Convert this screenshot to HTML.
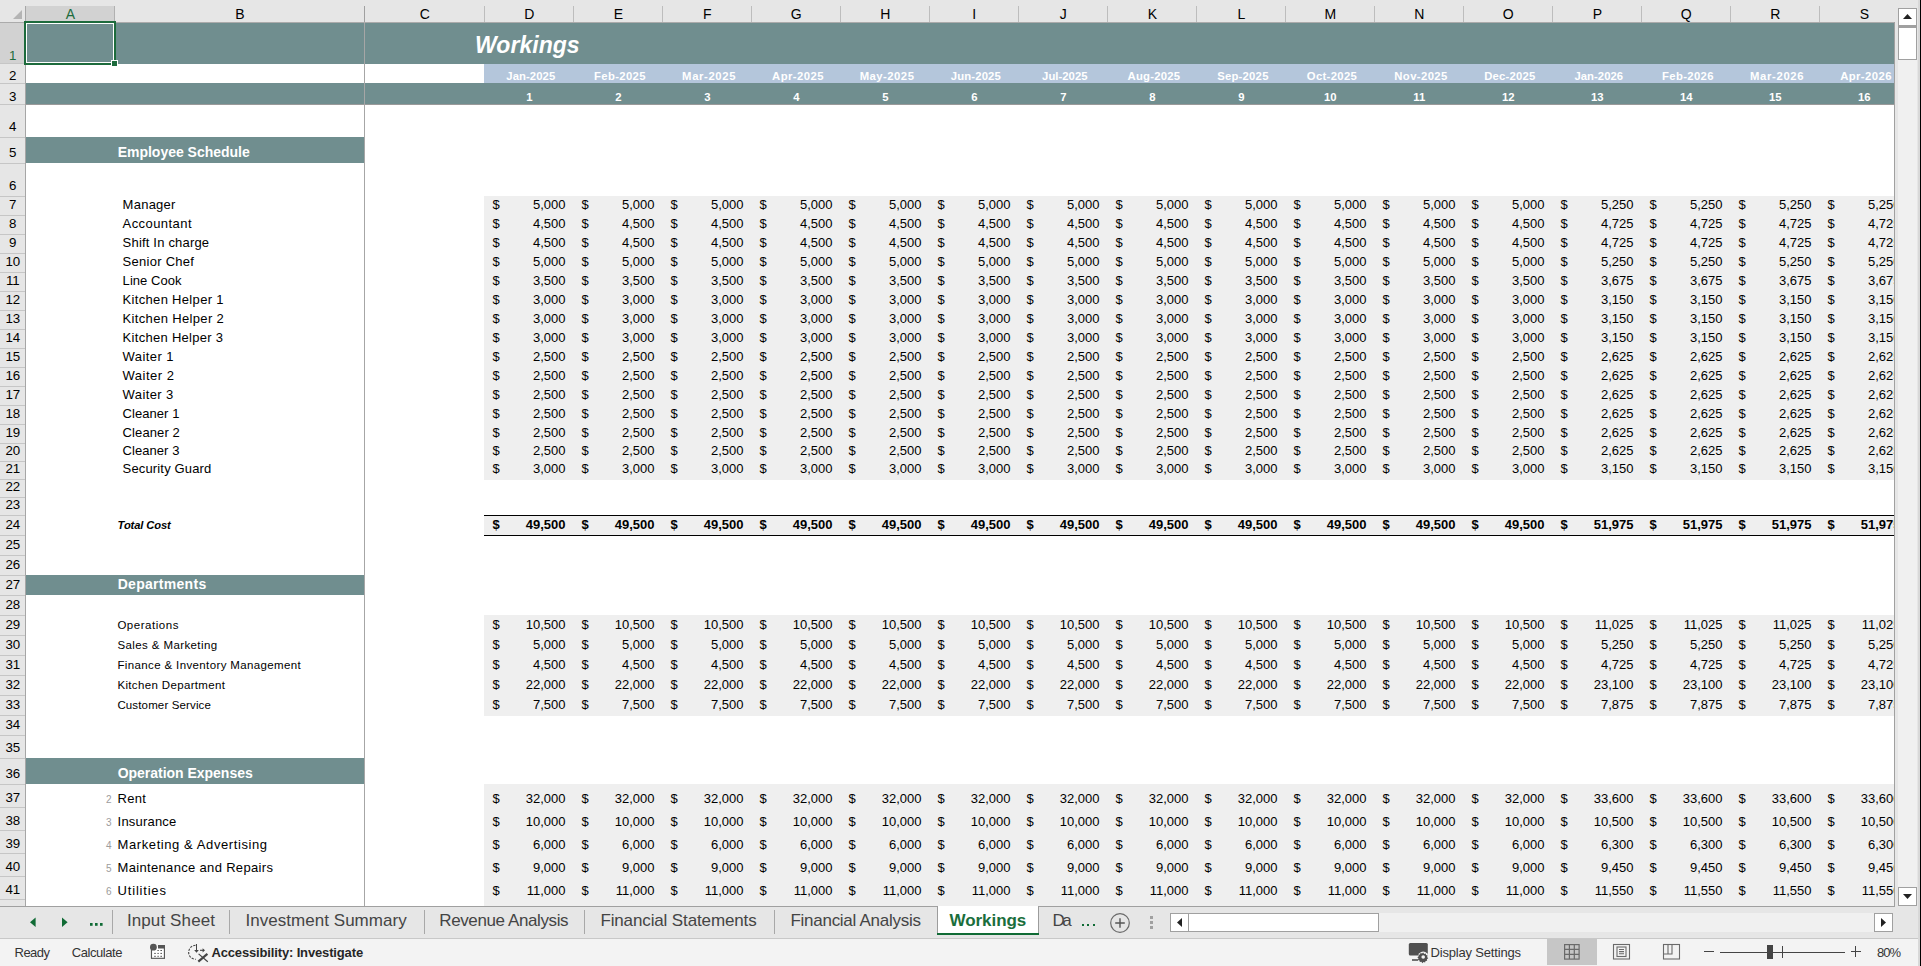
<!DOCTYPE html>
<html><head><meta charset="utf-8"><style>
html,body{margin:0;padding:0;}
body{width:1921px;height:966px;overflow:hidden;position:relative;font-family:"Liberation Sans",sans-serif;background:#fff;}
div,span,svg{position:absolute;}
span{white-space:pre;}
</style></head><body>
<div style="left:0px;top:0px;width:1921px;height:966px;background:#ffffff;"></div><div style="left:0px;top:0px;width:1894px;height:22px;background:#e6e6e6;"></div><div style="left:0px;top:22px;width:25px;height:884px;background:#e6e6e6;"></div><div style="left:26px;top:23px;width:1868px;height:883px;overflow:hidden;background:#fff"><div style="left:0px;top:0px;width:1868px;height:41px;background:#708e8f;"></div><div style="left:458px;top:41px;width:1410px;height:19px;background:#b4c6db;"></div><div style="left:0px;top:60px;width:1868px;height:21px;background:#708e8f;"></div><div style="left:0px;top:81px;width:1868px;height:1px;background:#9a9a9a;"></div><span style="left:449.00px;top:11.00px;font-size:23px;line-height:23px;color:#fff;font-weight:bold;font-style:italic;letter-spacing:0.032px;">Workings</span><span style="left:480.35px;top:48.00px;font-size:11.3px;line-height:11.3px;color:#fff;font-weight:bold;letter-spacing:0.075px;">Jan-2025</span><span style="left:500.16px;top:69.00px;font-size:11.3px;line-height:11.3px;color:#fff;font-weight:bold;">1</span><span style="left:568.05px;top:48.00px;font-size:11.3px;line-height:11.3px;color:#fff;font-weight:bold;letter-spacing:0.359px;">Feb-2025</span><span style="left:589.16px;top:69.00px;font-size:11.3px;line-height:11.3px;color:#fff;font-weight:bold;">2</span><span style="left:656.10px;top:48.00px;font-size:11.3px;line-height:11.3px;color:#fff;font-weight:bold;letter-spacing:0.629px;">Mar-2025</span><span style="left:678.16px;top:69.00px;font-size:11.3px;line-height:11.3px;color:#fff;font-weight:bold;">3</span><span style="left:746.05px;top:48.00px;font-size:11.3px;line-height:11.3px;color:#fff;font-weight:bold;letter-spacing:0.448px;">Apr-2025</span><span style="left:767.16px;top:69.00px;font-size:11.3px;line-height:11.3px;color:#fff;font-weight:bold;">4</span><span style="left:833.65px;top:48.00px;font-size:11.3px;line-height:11.3px;color:#fff;font-weight:bold;letter-spacing:0.488px;">May-2025</span><span style="left:856.16px;top:69.00px;font-size:11.3px;line-height:11.3px;color:#fff;font-weight:bold;">5</span><span style="left:924.80px;top:48.00px;font-size:11.3px;line-height:11.3px;color:#fff;font-weight:bold;letter-spacing:0.145px;">Jun-2025</span><span style="left:945.16px;top:69.00px;font-size:11.3px;line-height:11.3px;color:#fff;font-weight:bold;">6</span><span style="left:1016.10px;top:48.00px;font-size:11.3px;line-height:11.3px;color:#fff;font-weight:bold;letter-spacing:0.025px;">Jul-2025</span><span style="left:1034.16px;top:69.00px;font-size:11.3px;line-height:11.3px;color:#fff;font-weight:bold;">7</span><span style="left:1101.60px;top:48.00px;font-size:11.3px;line-height:11.3px;color:#fff;font-weight:bold;letter-spacing:0.218px;">Aug-2025</span><span style="left:1123.16px;top:69.00px;font-size:11.3px;line-height:11.3px;color:#fff;font-weight:bold;">8</span><span style="left:1191.15px;top:48.00px;font-size:11.3px;line-height:11.3px;color:#fff;font-weight:bold;letter-spacing:0.239px;">Sep-2025</span><span style="left:1212.16px;top:69.00px;font-size:11.3px;line-height:11.3px;color:#fff;font-weight:bold;">9</span><span style="left:1280.80px;top:48.00px;font-size:11.3px;line-height:11.3px;color:#fff;font-weight:bold;letter-spacing:0.323px;">Oct-2025</span><span style="left:1298.02px;top:69.00px;font-size:11.3px;line-height:11.3px;color:#fff;font-weight:bold;">10</span><span style="left:1368.30px;top:48.00px;font-size:11.3px;line-height:11.3px;color:#fff;font-weight:bold;letter-spacing:0.393px;">Nov-2025</span><span style="left:1387.33px;top:69.00px;font-size:11.3px;line-height:11.3px;color:#fff;font-weight:bold;">11</span><span style="left:1458.25px;top:48.00px;font-size:11.3px;line-height:11.3px;color:#fff;font-weight:bold;letter-spacing:0.210px;">Dec-2025</span><span style="left:1476.02px;top:69.00px;font-size:11.3px;line-height:11.3px;color:#fff;font-weight:bold;">12</span><span style="left:1548.42px;top:48.00px;font-size:11.3px;line-height:11.3px;color:#fff;font-weight:bold;letter-spacing:0.054px;">Jan-2026</span><span style="left:1565.02px;top:69.00px;font-size:11.3px;line-height:11.3px;color:#fff;font-weight:bold;">13</span><span style="left:1636.05px;top:48.00px;font-size:11.3px;line-height:11.3px;color:#fff;font-weight:bold;letter-spacing:0.359px;">Feb-2026</span><span style="left:1654.02px;top:69.00px;font-size:11.3px;line-height:11.3px;color:#fff;font-weight:bold;">14</span><span style="left:1724.05px;top:48.00px;font-size:11.3px;line-height:11.3px;color:#fff;font-weight:bold;letter-spacing:0.643px;">Mar-2026</span><span style="left:1743.02px;top:69.00px;font-size:11.3px;line-height:11.3px;color:#fff;font-weight:bold;">15</span><span style="left:1814.15px;top:48.00px;font-size:11.3px;line-height:11.3px;color:#fff;font-weight:bold;letter-spacing:0.419px;">Apr-2026</span><span style="left:1832.02px;top:69.00px;font-size:11.3px;line-height:11.3px;color:#fff;font-weight:bold;">16</span><div style="left:0px;top:114px;width:338px;height:26px;background:#708e8f;"></div><span style="left:91.70px;top:122.00px;font-size:14px;line-height:14px;color:#fff;font-weight:bold;letter-spacing:-0.017px;">Employee Schedule</span><div style="left:0px;top:552px;width:338px;height:20px;background:#708e8f;"></div><span style="left:91.70px;top:554.00px;font-size:14px;line-height:14px;color:#fff;font-weight:bold;letter-spacing:0.292px;">Departments</span><div style="left:0px;top:735px;width:338px;height:26px;background:#708e8f;"></div><span style="left:91.70px;top:743.00px;font-size:14px;line-height:14px;color:#fff;font-weight:bold;letter-spacing:-0.022px;">Operation Expenses</span><div style="left:458px;top:173px;width:1410px;height:284px;background:#efefef;"></div><span style="left:96.60px;top:175.00px;font-size:13px;line-height:13px;color:#000;letter-spacing:0.248px;">Manager</span><span style="left:466.50px;top:175.00px;font-size:13px;line-height:13px;color:#000;">$</span><span style="left:506.97px;top:175.00px;font-size:13px;line-height:13px;color:#000;">5,000</span><span style="left:555.50px;top:175.00px;font-size:13px;line-height:13px;color:#000;">$</span><span style="left:595.97px;top:175.00px;font-size:13px;line-height:13px;color:#000;">5,000</span><span style="left:644.50px;top:175.00px;font-size:13px;line-height:13px;color:#000;">$</span><span style="left:684.97px;top:175.00px;font-size:13px;line-height:13px;color:#000;">5,000</span><span style="left:733.50px;top:175.00px;font-size:13px;line-height:13px;color:#000;">$</span><span style="left:773.97px;top:175.00px;font-size:13px;line-height:13px;color:#000;">5,000</span><span style="left:822.50px;top:175.00px;font-size:13px;line-height:13px;color:#000;">$</span><span style="left:862.97px;top:175.00px;font-size:13px;line-height:13px;color:#000;">5,000</span><span style="left:911.50px;top:175.00px;font-size:13px;line-height:13px;color:#000;">$</span><span style="left:951.97px;top:175.00px;font-size:13px;line-height:13px;color:#000;">5,000</span><span style="left:1000.50px;top:175.00px;font-size:13px;line-height:13px;color:#000;">$</span><span style="left:1040.97px;top:175.00px;font-size:13px;line-height:13px;color:#000;">5,000</span><span style="left:1089.50px;top:175.00px;font-size:13px;line-height:13px;color:#000;">$</span><span style="left:1129.97px;top:175.00px;font-size:13px;line-height:13px;color:#000;">5,000</span><span style="left:1178.50px;top:175.00px;font-size:13px;line-height:13px;color:#000;">$</span><span style="left:1218.97px;top:175.00px;font-size:13px;line-height:13px;color:#000;">5,000</span><span style="left:1267.50px;top:175.00px;font-size:13px;line-height:13px;color:#000;">$</span><span style="left:1307.97px;top:175.00px;font-size:13px;line-height:13px;color:#000;">5,000</span><span style="left:1356.50px;top:175.00px;font-size:13px;line-height:13px;color:#000;">$</span><span style="left:1396.97px;top:175.00px;font-size:13px;line-height:13px;color:#000;">5,000</span><span style="left:1445.50px;top:175.00px;font-size:13px;line-height:13px;color:#000;">$</span><span style="left:1485.97px;top:175.00px;font-size:13px;line-height:13px;color:#000;">5,000</span><span style="left:1534.50px;top:175.00px;font-size:13px;line-height:13px;color:#000;">$</span><span style="left:1574.97px;top:175.00px;font-size:13px;line-height:13px;color:#000;">5,250</span><span style="left:1623.50px;top:175.00px;font-size:13px;line-height:13px;color:#000;">$</span><span style="left:1663.97px;top:175.00px;font-size:13px;line-height:13px;color:#000;">5,250</span><span style="left:1712.50px;top:175.00px;font-size:13px;line-height:13px;color:#000;">$</span><span style="left:1752.97px;top:175.00px;font-size:13px;line-height:13px;color:#000;">5,250</span><span style="left:1801.50px;top:175.00px;font-size:13px;line-height:13px;color:#000;">$</span><span style="left:1841.97px;top:175.00px;font-size:13px;line-height:13px;color:#000;">5,250</span><span style="left:96.60px;top:194.00px;font-size:13px;line-height:13px;color:#000;letter-spacing:0.429px;">Accountant</span><span style="left:466.50px;top:194.00px;font-size:13px;line-height:13px;color:#000;">$</span><span style="left:506.97px;top:194.00px;font-size:13px;line-height:13px;color:#000;">4,500</span><span style="left:555.50px;top:194.00px;font-size:13px;line-height:13px;color:#000;">$</span><span style="left:595.97px;top:194.00px;font-size:13px;line-height:13px;color:#000;">4,500</span><span style="left:644.50px;top:194.00px;font-size:13px;line-height:13px;color:#000;">$</span><span style="left:684.97px;top:194.00px;font-size:13px;line-height:13px;color:#000;">4,500</span><span style="left:733.50px;top:194.00px;font-size:13px;line-height:13px;color:#000;">$</span><span style="left:773.97px;top:194.00px;font-size:13px;line-height:13px;color:#000;">4,500</span><span style="left:822.50px;top:194.00px;font-size:13px;line-height:13px;color:#000;">$</span><span style="left:862.97px;top:194.00px;font-size:13px;line-height:13px;color:#000;">4,500</span><span style="left:911.50px;top:194.00px;font-size:13px;line-height:13px;color:#000;">$</span><span style="left:951.97px;top:194.00px;font-size:13px;line-height:13px;color:#000;">4,500</span><span style="left:1000.50px;top:194.00px;font-size:13px;line-height:13px;color:#000;">$</span><span style="left:1040.97px;top:194.00px;font-size:13px;line-height:13px;color:#000;">4,500</span><span style="left:1089.50px;top:194.00px;font-size:13px;line-height:13px;color:#000;">$</span><span style="left:1129.97px;top:194.00px;font-size:13px;line-height:13px;color:#000;">4,500</span><span style="left:1178.50px;top:194.00px;font-size:13px;line-height:13px;color:#000;">$</span><span style="left:1218.97px;top:194.00px;font-size:13px;line-height:13px;color:#000;">4,500</span><span style="left:1267.50px;top:194.00px;font-size:13px;line-height:13px;color:#000;">$</span><span style="left:1307.97px;top:194.00px;font-size:13px;line-height:13px;color:#000;">4,500</span><span style="left:1356.50px;top:194.00px;font-size:13px;line-height:13px;color:#000;">$</span><span style="left:1396.97px;top:194.00px;font-size:13px;line-height:13px;color:#000;">4,500</span><span style="left:1445.50px;top:194.00px;font-size:13px;line-height:13px;color:#000;">$</span><span style="left:1485.97px;top:194.00px;font-size:13px;line-height:13px;color:#000;">4,500</span><span style="left:1534.50px;top:194.00px;font-size:13px;line-height:13px;color:#000;">$</span><span style="left:1574.97px;top:194.00px;font-size:13px;line-height:13px;color:#000;">4,725</span><span style="left:1623.50px;top:194.00px;font-size:13px;line-height:13px;color:#000;">$</span><span style="left:1663.97px;top:194.00px;font-size:13px;line-height:13px;color:#000;">4,725</span><span style="left:1712.50px;top:194.00px;font-size:13px;line-height:13px;color:#000;">$</span><span style="left:1752.97px;top:194.00px;font-size:13px;line-height:13px;color:#000;">4,725</span><span style="left:1801.50px;top:194.00px;font-size:13px;line-height:13px;color:#000;">$</span><span style="left:1841.97px;top:194.00px;font-size:13px;line-height:13px;color:#000;">4,725</span><span style="left:96.60px;top:213.00px;font-size:13px;line-height:13px;color:#000;letter-spacing:0.191px;">Shift In charge</span><span style="left:466.50px;top:213.00px;font-size:13px;line-height:13px;color:#000;">$</span><span style="left:506.97px;top:213.00px;font-size:13px;line-height:13px;color:#000;">4,500</span><span style="left:555.50px;top:213.00px;font-size:13px;line-height:13px;color:#000;">$</span><span style="left:595.97px;top:213.00px;font-size:13px;line-height:13px;color:#000;">4,500</span><span style="left:644.50px;top:213.00px;font-size:13px;line-height:13px;color:#000;">$</span><span style="left:684.97px;top:213.00px;font-size:13px;line-height:13px;color:#000;">4,500</span><span style="left:733.50px;top:213.00px;font-size:13px;line-height:13px;color:#000;">$</span><span style="left:773.97px;top:213.00px;font-size:13px;line-height:13px;color:#000;">4,500</span><span style="left:822.50px;top:213.00px;font-size:13px;line-height:13px;color:#000;">$</span><span style="left:862.97px;top:213.00px;font-size:13px;line-height:13px;color:#000;">4,500</span><span style="left:911.50px;top:213.00px;font-size:13px;line-height:13px;color:#000;">$</span><span style="left:951.97px;top:213.00px;font-size:13px;line-height:13px;color:#000;">4,500</span><span style="left:1000.50px;top:213.00px;font-size:13px;line-height:13px;color:#000;">$</span><span style="left:1040.97px;top:213.00px;font-size:13px;line-height:13px;color:#000;">4,500</span><span style="left:1089.50px;top:213.00px;font-size:13px;line-height:13px;color:#000;">$</span><span style="left:1129.97px;top:213.00px;font-size:13px;line-height:13px;color:#000;">4,500</span><span style="left:1178.50px;top:213.00px;font-size:13px;line-height:13px;color:#000;">$</span><span style="left:1218.97px;top:213.00px;font-size:13px;line-height:13px;color:#000;">4,500</span><span style="left:1267.50px;top:213.00px;font-size:13px;line-height:13px;color:#000;">$</span><span style="left:1307.97px;top:213.00px;font-size:13px;line-height:13px;color:#000;">4,500</span><span style="left:1356.50px;top:213.00px;font-size:13px;line-height:13px;color:#000;">$</span><span style="left:1396.97px;top:213.00px;font-size:13px;line-height:13px;color:#000;">4,500</span><span style="left:1445.50px;top:213.00px;font-size:13px;line-height:13px;color:#000;">$</span><span style="left:1485.97px;top:213.00px;font-size:13px;line-height:13px;color:#000;">4,500</span><span style="left:1534.50px;top:213.00px;font-size:13px;line-height:13px;color:#000;">$</span><span style="left:1574.97px;top:213.00px;font-size:13px;line-height:13px;color:#000;">4,725</span><span style="left:1623.50px;top:213.00px;font-size:13px;line-height:13px;color:#000;">$</span><span style="left:1663.97px;top:213.00px;font-size:13px;line-height:13px;color:#000;">4,725</span><span style="left:1712.50px;top:213.00px;font-size:13px;line-height:13px;color:#000;">$</span><span style="left:1752.97px;top:213.00px;font-size:13px;line-height:13px;color:#000;">4,725</span><span style="left:1801.50px;top:213.00px;font-size:13px;line-height:13px;color:#000;">$</span><span style="left:1841.97px;top:213.00px;font-size:13px;line-height:13px;color:#000;">4,725</span><span style="left:96.60px;top:232.00px;font-size:13px;line-height:13px;color:#000;letter-spacing:0.272px;">Senior Chef</span><span style="left:466.50px;top:232.00px;font-size:13px;line-height:13px;color:#000;">$</span><span style="left:506.97px;top:232.00px;font-size:13px;line-height:13px;color:#000;">5,000</span><span style="left:555.50px;top:232.00px;font-size:13px;line-height:13px;color:#000;">$</span><span style="left:595.97px;top:232.00px;font-size:13px;line-height:13px;color:#000;">5,000</span><span style="left:644.50px;top:232.00px;font-size:13px;line-height:13px;color:#000;">$</span><span style="left:684.97px;top:232.00px;font-size:13px;line-height:13px;color:#000;">5,000</span><span style="left:733.50px;top:232.00px;font-size:13px;line-height:13px;color:#000;">$</span><span style="left:773.97px;top:232.00px;font-size:13px;line-height:13px;color:#000;">5,000</span><span style="left:822.50px;top:232.00px;font-size:13px;line-height:13px;color:#000;">$</span><span style="left:862.97px;top:232.00px;font-size:13px;line-height:13px;color:#000;">5,000</span><span style="left:911.50px;top:232.00px;font-size:13px;line-height:13px;color:#000;">$</span><span style="left:951.97px;top:232.00px;font-size:13px;line-height:13px;color:#000;">5,000</span><span style="left:1000.50px;top:232.00px;font-size:13px;line-height:13px;color:#000;">$</span><span style="left:1040.97px;top:232.00px;font-size:13px;line-height:13px;color:#000;">5,000</span><span style="left:1089.50px;top:232.00px;font-size:13px;line-height:13px;color:#000;">$</span><span style="left:1129.97px;top:232.00px;font-size:13px;line-height:13px;color:#000;">5,000</span><span style="left:1178.50px;top:232.00px;font-size:13px;line-height:13px;color:#000;">$</span><span style="left:1218.97px;top:232.00px;font-size:13px;line-height:13px;color:#000;">5,000</span><span style="left:1267.50px;top:232.00px;font-size:13px;line-height:13px;color:#000;">$</span><span style="left:1307.97px;top:232.00px;font-size:13px;line-height:13px;color:#000;">5,000</span><span style="left:1356.50px;top:232.00px;font-size:13px;line-height:13px;color:#000;">$</span><span style="left:1396.97px;top:232.00px;font-size:13px;line-height:13px;color:#000;">5,000</span><span style="left:1445.50px;top:232.00px;font-size:13px;line-height:13px;color:#000;">$</span><span style="left:1485.97px;top:232.00px;font-size:13px;line-height:13px;color:#000;">5,000</span><span style="left:1534.50px;top:232.00px;font-size:13px;line-height:13px;color:#000;">$</span><span style="left:1574.97px;top:232.00px;font-size:13px;line-height:13px;color:#000;">5,250</span><span style="left:1623.50px;top:232.00px;font-size:13px;line-height:13px;color:#000;">$</span><span style="left:1663.97px;top:232.00px;font-size:13px;line-height:13px;color:#000;">5,250</span><span style="left:1712.50px;top:232.00px;font-size:13px;line-height:13px;color:#000;">$</span><span style="left:1752.97px;top:232.00px;font-size:13px;line-height:13px;color:#000;">5,250</span><span style="left:1801.50px;top:232.00px;font-size:13px;line-height:13px;color:#000;">$</span><span style="left:1841.97px;top:232.00px;font-size:13px;line-height:13px;color:#000;">5,250</span><span style="left:96.60px;top:251.00px;font-size:13px;line-height:13px;color:#000;letter-spacing:0.054px;">Line Cook</span><span style="left:466.50px;top:251.00px;font-size:13px;line-height:13px;color:#000;">$</span><span style="left:506.97px;top:251.00px;font-size:13px;line-height:13px;color:#000;">3,500</span><span style="left:555.50px;top:251.00px;font-size:13px;line-height:13px;color:#000;">$</span><span style="left:595.97px;top:251.00px;font-size:13px;line-height:13px;color:#000;">3,500</span><span style="left:644.50px;top:251.00px;font-size:13px;line-height:13px;color:#000;">$</span><span style="left:684.97px;top:251.00px;font-size:13px;line-height:13px;color:#000;">3,500</span><span style="left:733.50px;top:251.00px;font-size:13px;line-height:13px;color:#000;">$</span><span style="left:773.97px;top:251.00px;font-size:13px;line-height:13px;color:#000;">3,500</span><span style="left:822.50px;top:251.00px;font-size:13px;line-height:13px;color:#000;">$</span><span style="left:862.97px;top:251.00px;font-size:13px;line-height:13px;color:#000;">3,500</span><span style="left:911.50px;top:251.00px;font-size:13px;line-height:13px;color:#000;">$</span><span style="left:951.97px;top:251.00px;font-size:13px;line-height:13px;color:#000;">3,500</span><span style="left:1000.50px;top:251.00px;font-size:13px;line-height:13px;color:#000;">$</span><span style="left:1040.97px;top:251.00px;font-size:13px;line-height:13px;color:#000;">3,500</span><span style="left:1089.50px;top:251.00px;font-size:13px;line-height:13px;color:#000;">$</span><span style="left:1129.97px;top:251.00px;font-size:13px;line-height:13px;color:#000;">3,500</span><span style="left:1178.50px;top:251.00px;font-size:13px;line-height:13px;color:#000;">$</span><span style="left:1218.97px;top:251.00px;font-size:13px;line-height:13px;color:#000;">3,500</span><span style="left:1267.50px;top:251.00px;font-size:13px;line-height:13px;color:#000;">$</span><span style="left:1307.97px;top:251.00px;font-size:13px;line-height:13px;color:#000;">3,500</span><span style="left:1356.50px;top:251.00px;font-size:13px;line-height:13px;color:#000;">$</span><span style="left:1396.97px;top:251.00px;font-size:13px;line-height:13px;color:#000;">3,500</span><span style="left:1445.50px;top:251.00px;font-size:13px;line-height:13px;color:#000;">$</span><span style="left:1485.97px;top:251.00px;font-size:13px;line-height:13px;color:#000;">3,500</span><span style="left:1534.50px;top:251.00px;font-size:13px;line-height:13px;color:#000;">$</span><span style="left:1574.97px;top:251.00px;font-size:13px;line-height:13px;color:#000;">3,675</span><span style="left:1623.50px;top:251.00px;font-size:13px;line-height:13px;color:#000;">$</span><span style="left:1663.97px;top:251.00px;font-size:13px;line-height:13px;color:#000;">3,675</span><span style="left:1712.50px;top:251.00px;font-size:13px;line-height:13px;color:#000;">$</span><span style="left:1752.97px;top:251.00px;font-size:13px;line-height:13px;color:#000;">3,675</span><span style="left:1801.50px;top:251.00px;font-size:13px;line-height:13px;color:#000;">$</span><span style="left:1841.97px;top:251.00px;font-size:13px;line-height:13px;color:#000;">3,675</span><span style="left:96.60px;top:270.00px;font-size:13px;line-height:13px;color:#000;letter-spacing:0.319px;">Kitchen Helper 1</span><span style="left:466.50px;top:270.00px;font-size:13px;line-height:13px;color:#000;">$</span><span style="left:506.97px;top:270.00px;font-size:13px;line-height:13px;color:#000;">3,000</span><span style="left:555.50px;top:270.00px;font-size:13px;line-height:13px;color:#000;">$</span><span style="left:595.97px;top:270.00px;font-size:13px;line-height:13px;color:#000;">3,000</span><span style="left:644.50px;top:270.00px;font-size:13px;line-height:13px;color:#000;">$</span><span style="left:684.97px;top:270.00px;font-size:13px;line-height:13px;color:#000;">3,000</span><span style="left:733.50px;top:270.00px;font-size:13px;line-height:13px;color:#000;">$</span><span style="left:773.97px;top:270.00px;font-size:13px;line-height:13px;color:#000;">3,000</span><span style="left:822.50px;top:270.00px;font-size:13px;line-height:13px;color:#000;">$</span><span style="left:862.97px;top:270.00px;font-size:13px;line-height:13px;color:#000;">3,000</span><span style="left:911.50px;top:270.00px;font-size:13px;line-height:13px;color:#000;">$</span><span style="left:951.97px;top:270.00px;font-size:13px;line-height:13px;color:#000;">3,000</span><span style="left:1000.50px;top:270.00px;font-size:13px;line-height:13px;color:#000;">$</span><span style="left:1040.97px;top:270.00px;font-size:13px;line-height:13px;color:#000;">3,000</span><span style="left:1089.50px;top:270.00px;font-size:13px;line-height:13px;color:#000;">$</span><span style="left:1129.97px;top:270.00px;font-size:13px;line-height:13px;color:#000;">3,000</span><span style="left:1178.50px;top:270.00px;font-size:13px;line-height:13px;color:#000;">$</span><span style="left:1218.97px;top:270.00px;font-size:13px;line-height:13px;color:#000;">3,000</span><span style="left:1267.50px;top:270.00px;font-size:13px;line-height:13px;color:#000;">$</span><span style="left:1307.97px;top:270.00px;font-size:13px;line-height:13px;color:#000;">3,000</span><span style="left:1356.50px;top:270.00px;font-size:13px;line-height:13px;color:#000;">$</span><span style="left:1396.97px;top:270.00px;font-size:13px;line-height:13px;color:#000;">3,000</span><span style="left:1445.50px;top:270.00px;font-size:13px;line-height:13px;color:#000;">$</span><span style="left:1485.97px;top:270.00px;font-size:13px;line-height:13px;color:#000;">3,000</span><span style="left:1534.50px;top:270.00px;font-size:13px;line-height:13px;color:#000;">$</span><span style="left:1574.97px;top:270.00px;font-size:13px;line-height:13px;color:#000;">3,150</span><span style="left:1623.50px;top:270.00px;font-size:13px;line-height:13px;color:#000;">$</span><span style="left:1663.97px;top:270.00px;font-size:13px;line-height:13px;color:#000;">3,150</span><span style="left:1712.50px;top:270.00px;font-size:13px;line-height:13px;color:#000;">$</span><span style="left:1752.97px;top:270.00px;font-size:13px;line-height:13px;color:#000;">3,150</span><span style="left:1801.50px;top:270.00px;font-size:13px;line-height:13px;color:#000;">$</span><span style="left:1841.97px;top:270.00px;font-size:13px;line-height:13px;color:#000;">3,150</span><span style="left:96.60px;top:289.00px;font-size:13px;line-height:13px;color:#000;letter-spacing:0.339px;">Kitchen Helper 2</span><span style="left:466.50px;top:289.00px;font-size:13px;line-height:13px;color:#000;">$</span><span style="left:506.97px;top:289.00px;font-size:13px;line-height:13px;color:#000;">3,000</span><span style="left:555.50px;top:289.00px;font-size:13px;line-height:13px;color:#000;">$</span><span style="left:595.97px;top:289.00px;font-size:13px;line-height:13px;color:#000;">3,000</span><span style="left:644.50px;top:289.00px;font-size:13px;line-height:13px;color:#000;">$</span><span style="left:684.97px;top:289.00px;font-size:13px;line-height:13px;color:#000;">3,000</span><span style="left:733.50px;top:289.00px;font-size:13px;line-height:13px;color:#000;">$</span><span style="left:773.97px;top:289.00px;font-size:13px;line-height:13px;color:#000;">3,000</span><span style="left:822.50px;top:289.00px;font-size:13px;line-height:13px;color:#000;">$</span><span style="left:862.97px;top:289.00px;font-size:13px;line-height:13px;color:#000;">3,000</span><span style="left:911.50px;top:289.00px;font-size:13px;line-height:13px;color:#000;">$</span><span style="left:951.97px;top:289.00px;font-size:13px;line-height:13px;color:#000;">3,000</span><span style="left:1000.50px;top:289.00px;font-size:13px;line-height:13px;color:#000;">$</span><span style="left:1040.97px;top:289.00px;font-size:13px;line-height:13px;color:#000;">3,000</span><span style="left:1089.50px;top:289.00px;font-size:13px;line-height:13px;color:#000;">$</span><span style="left:1129.97px;top:289.00px;font-size:13px;line-height:13px;color:#000;">3,000</span><span style="left:1178.50px;top:289.00px;font-size:13px;line-height:13px;color:#000;">$</span><span style="left:1218.97px;top:289.00px;font-size:13px;line-height:13px;color:#000;">3,000</span><span style="left:1267.50px;top:289.00px;font-size:13px;line-height:13px;color:#000;">$</span><span style="left:1307.97px;top:289.00px;font-size:13px;line-height:13px;color:#000;">3,000</span><span style="left:1356.50px;top:289.00px;font-size:13px;line-height:13px;color:#000;">$</span><span style="left:1396.97px;top:289.00px;font-size:13px;line-height:13px;color:#000;">3,000</span><span style="left:1445.50px;top:289.00px;font-size:13px;line-height:13px;color:#000;">$</span><span style="left:1485.97px;top:289.00px;font-size:13px;line-height:13px;color:#000;">3,000</span><span style="left:1534.50px;top:289.00px;font-size:13px;line-height:13px;color:#000;">$</span><span style="left:1574.97px;top:289.00px;font-size:13px;line-height:13px;color:#000;">3,150</span><span style="left:1623.50px;top:289.00px;font-size:13px;line-height:13px;color:#000;">$</span><span style="left:1663.97px;top:289.00px;font-size:13px;line-height:13px;color:#000;">3,150</span><span style="left:1712.50px;top:289.00px;font-size:13px;line-height:13px;color:#000;">$</span><span style="left:1752.97px;top:289.00px;font-size:13px;line-height:13px;color:#000;">3,150</span><span style="left:1801.50px;top:289.00px;font-size:13px;line-height:13px;color:#000;">$</span><span style="left:1841.97px;top:289.00px;font-size:13px;line-height:13px;color:#000;">3,150</span><span style="left:96.60px;top:308.00px;font-size:13px;line-height:13px;color:#000;letter-spacing:0.293px;">Kitchen Helper 3</span><span style="left:466.50px;top:308.00px;font-size:13px;line-height:13px;color:#000;">$</span><span style="left:506.97px;top:308.00px;font-size:13px;line-height:13px;color:#000;">3,000</span><span style="left:555.50px;top:308.00px;font-size:13px;line-height:13px;color:#000;">$</span><span style="left:595.97px;top:308.00px;font-size:13px;line-height:13px;color:#000;">3,000</span><span style="left:644.50px;top:308.00px;font-size:13px;line-height:13px;color:#000;">$</span><span style="left:684.97px;top:308.00px;font-size:13px;line-height:13px;color:#000;">3,000</span><span style="left:733.50px;top:308.00px;font-size:13px;line-height:13px;color:#000;">$</span><span style="left:773.97px;top:308.00px;font-size:13px;line-height:13px;color:#000;">3,000</span><span style="left:822.50px;top:308.00px;font-size:13px;line-height:13px;color:#000;">$</span><span style="left:862.97px;top:308.00px;font-size:13px;line-height:13px;color:#000;">3,000</span><span style="left:911.50px;top:308.00px;font-size:13px;line-height:13px;color:#000;">$</span><span style="left:951.97px;top:308.00px;font-size:13px;line-height:13px;color:#000;">3,000</span><span style="left:1000.50px;top:308.00px;font-size:13px;line-height:13px;color:#000;">$</span><span style="left:1040.97px;top:308.00px;font-size:13px;line-height:13px;color:#000;">3,000</span><span style="left:1089.50px;top:308.00px;font-size:13px;line-height:13px;color:#000;">$</span><span style="left:1129.97px;top:308.00px;font-size:13px;line-height:13px;color:#000;">3,000</span><span style="left:1178.50px;top:308.00px;font-size:13px;line-height:13px;color:#000;">$</span><span style="left:1218.97px;top:308.00px;font-size:13px;line-height:13px;color:#000;">3,000</span><span style="left:1267.50px;top:308.00px;font-size:13px;line-height:13px;color:#000;">$</span><span style="left:1307.97px;top:308.00px;font-size:13px;line-height:13px;color:#000;">3,000</span><span style="left:1356.50px;top:308.00px;font-size:13px;line-height:13px;color:#000;">$</span><span style="left:1396.97px;top:308.00px;font-size:13px;line-height:13px;color:#000;">3,000</span><span style="left:1445.50px;top:308.00px;font-size:13px;line-height:13px;color:#000;">$</span><span style="left:1485.97px;top:308.00px;font-size:13px;line-height:13px;color:#000;">3,000</span><span style="left:1534.50px;top:308.00px;font-size:13px;line-height:13px;color:#000;">$</span><span style="left:1574.97px;top:308.00px;font-size:13px;line-height:13px;color:#000;">3,150</span><span style="left:1623.50px;top:308.00px;font-size:13px;line-height:13px;color:#000;">$</span><span style="left:1663.97px;top:308.00px;font-size:13px;line-height:13px;color:#000;">3,150</span><span style="left:1712.50px;top:308.00px;font-size:13px;line-height:13px;color:#000;">$</span><span style="left:1752.97px;top:308.00px;font-size:13px;line-height:13px;color:#000;">3,150</span><span style="left:1801.50px;top:308.00px;font-size:13px;line-height:13px;color:#000;">$</span><span style="left:1841.97px;top:308.00px;font-size:13px;line-height:13px;color:#000;">3,150</span><span style="left:96.60px;top:327.00px;font-size:13px;line-height:13px;color:#000;letter-spacing:0.440px;">Waiter 1</span><span style="left:466.50px;top:327.00px;font-size:13px;line-height:13px;color:#000;">$</span><span style="left:506.97px;top:327.00px;font-size:13px;line-height:13px;color:#000;">2,500</span><span style="left:555.50px;top:327.00px;font-size:13px;line-height:13px;color:#000;">$</span><span style="left:595.97px;top:327.00px;font-size:13px;line-height:13px;color:#000;">2,500</span><span style="left:644.50px;top:327.00px;font-size:13px;line-height:13px;color:#000;">$</span><span style="left:684.97px;top:327.00px;font-size:13px;line-height:13px;color:#000;">2,500</span><span style="left:733.50px;top:327.00px;font-size:13px;line-height:13px;color:#000;">$</span><span style="left:773.97px;top:327.00px;font-size:13px;line-height:13px;color:#000;">2,500</span><span style="left:822.50px;top:327.00px;font-size:13px;line-height:13px;color:#000;">$</span><span style="left:862.97px;top:327.00px;font-size:13px;line-height:13px;color:#000;">2,500</span><span style="left:911.50px;top:327.00px;font-size:13px;line-height:13px;color:#000;">$</span><span style="left:951.97px;top:327.00px;font-size:13px;line-height:13px;color:#000;">2,500</span><span style="left:1000.50px;top:327.00px;font-size:13px;line-height:13px;color:#000;">$</span><span style="left:1040.97px;top:327.00px;font-size:13px;line-height:13px;color:#000;">2,500</span><span style="left:1089.50px;top:327.00px;font-size:13px;line-height:13px;color:#000;">$</span><span style="left:1129.97px;top:327.00px;font-size:13px;line-height:13px;color:#000;">2,500</span><span style="left:1178.50px;top:327.00px;font-size:13px;line-height:13px;color:#000;">$</span><span style="left:1218.97px;top:327.00px;font-size:13px;line-height:13px;color:#000;">2,500</span><span style="left:1267.50px;top:327.00px;font-size:13px;line-height:13px;color:#000;">$</span><span style="left:1307.97px;top:327.00px;font-size:13px;line-height:13px;color:#000;">2,500</span><span style="left:1356.50px;top:327.00px;font-size:13px;line-height:13px;color:#000;">$</span><span style="left:1396.97px;top:327.00px;font-size:13px;line-height:13px;color:#000;">2,500</span><span style="left:1445.50px;top:327.00px;font-size:13px;line-height:13px;color:#000;">$</span><span style="left:1485.97px;top:327.00px;font-size:13px;line-height:13px;color:#000;">2,500</span><span style="left:1534.50px;top:327.00px;font-size:13px;line-height:13px;color:#000;">$</span><span style="left:1574.97px;top:327.00px;font-size:13px;line-height:13px;color:#000;">2,625</span><span style="left:1623.50px;top:327.00px;font-size:13px;line-height:13px;color:#000;">$</span><span style="left:1663.97px;top:327.00px;font-size:13px;line-height:13px;color:#000;">2,625</span><span style="left:1712.50px;top:327.00px;font-size:13px;line-height:13px;color:#000;">$</span><span style="left:1752.97px;top:327.00px;font-size:13px;line-height:13px;color:#000;">2,625</span><span style="left:1801.50px;top:327.00px;font-size:13px;line-height:13px;color:#000;">$</span><span style="left:1841.97px;top:327.00px;font-size:13px;line-height:13px;color:#000;">2,625</span><span style="left:96.60px;top:346.00px;font-size:13px;line-height:13px;color:#000;letter-spacing:0.483px;">Waiter 2</span><span style="left:466.50px;top:346.00px;font-size:13px;line-height:13px;color:#000;">$</span><span style="left:506.97px;top:346.00px;font-size:13px;line-height:13px;color:#000;">2,500</span><span style="left:555.50px;top:346.00px;font-size:13px;line-height:13px;color:#000;">$</span><span style="left:595.97px;top:346.00px;font-size:13px;line-height:13px;color:#000;">2,500</span><span style="left:644.50px;top:346.00px;font-size:13px;line-height:13px;color:#000;">$</span><span style="left:684.97px;top:346.00px;font-size:13px;line-height:13px;color:#000;">2,500</span><span style="left:733.50px;top:346.00px;font-size:13px;line-height:13px;color:#000;">$</span><span style="left:773.97px;top:346.00px;font-size:13px;line-height:13px;color:#000;">2,500</span><span style="left:822.50px;top:346.00px;font-size:13px;line-height:13px;color:#000;">$</span><span style="left:862.97px;top:346.00px;font-size:13px;line-height:13px;color:#000;">2,500</span><span style="left:911.50px;top:346.00px;font-size:13px;line-height:13px;color:#000;">$</span><span style="left:951.97px;top:346.00px;font-size:13px;line-height:13px;color:#000;">2,500</span><span style="left:1000.50px;top:346.00px;font-size:13px;line-height:13px;color:#000;">$</span><span style="left:1040.97px;top:346.00px;font-size:13px;line-height:13px;color:#000;">2,500</span><span style="left:1089.50px;top:346.00px;font-size:13px;line-height:13px;color:#000;">$</span><span style="left:1129.97px;top:346.00px;font-size:13px;line-height:13px;color:#000;">2,500</span><span style="left:1178.50px;top:346.00px;font-size:13px;line-height:13px;color:#000;">$</span><span style="left:1218.97px;top:346.00px;font-size:13px;line-height:13px;color:#000;">2,500</span><span style="left:1267.50px;top:346.00px;font-size:13px;line-height:13px;color:#000;">$</span><span style="left:1307.97px;top:346.00px;font-size:13px;line-height:13px;color:#000;">2,500</span><span style="left:1356.50px;top:346.00px;font-size:13px;line-height:13px;color:#000;">$</span><span style="left:1396.97px;top:346.00px;font-size:13px;line-height:13px;color:#000;">2,500</span><span style="left:1445.50px;top:346.00px;font-size:13px;line-height:13px;color:#000;">$</span><span style="left:1485.97px;top:346.00px;font-size:13px;line-height:13px;color:#000;">2,500</span><span style="left:1534.50px;top:346.00px;font-size:13px;line-height:13px;color:#000;">$</span><span style="left:1574.97px;top:346.00px;font-size:13px;line-height:13px;color:#000;">2,625</span><span style="left:1623.50px;top:346.00px;font-size:13px;line-height:13px;color:#000;">$</span><span style="left:1663.97px;top:346.00px;font-size:13px;line-height:13px;color:#000;">2,625</span><span style="left:1712.50px;top:346.00px;font-size:13px;line-height:13px;color:#000;">$</span><span style="left:1752.97px;top:346.00px;font-size:13px;line-height:13px;color:#000;">2,625</span><span style="left:1801.50px;top:346.00px;font-size:13px;line-height:13px;color:#000;">$</span><span style="left:1841.97px;top:346.00px;font-size:13px;line-height:13px;color:#000;">2,625</span><span style="left:96.60px;top:365.00px;font-size:13px;line-height:13px;color:#000;letter-spacing:0.397px;">Waiter 3</span><span style="left:466.50px;top:365.00px;font-size:13px;line-height:13px;color:#000;">$</span><span style="left:506.97px;top:365.00px;font-size:13px;line-height:13px;color:#000;">2,500</span><span style="left:555.50px;top:365.00px;font-size:13px;line-height:13px;color:#000;">$</span><span style="left:595.97px;top:365.00px;font-size:13px;line-height:13px;color:#000;">2,500</span><span style="left:644.50px;top:365.00px;font-size:13px;line-height:13px;color:#000;">$</span><span style="left:684.97px;top:365.00px;font-size:13px;line-height:13px;color:#000;">2,500</span><span style="left:733.50px;top:365.00px;font-size:13px;line-height:13px;color:#000;">$</span><span style="left:773.97px;top:365.00px;font-size:13px;line-height:13px;color:#000;">2,500</span><span style="left:822.50px;top:365.00px;font-size:13px;line-height:13px;color:#000;">$</span><span style="left:862.97px;top:365.00px;font-size:13px;line-height:13px;color:#000;">2,500</span><span style="left:911.50px;top:365.00px;font-size:13px;line-height:13px;color:#000;">$</span><span style="left:951.97px;top:365.00px;font-size:13px;line-height:13px;color:#000;">2,500</span><span style="left:1000.50px;top:365.00px;font-size:13px;line-height:13px;color:#000;">$</span><span style="left:1040.97px;top:365.00px;font-size:13px;line-height:13px;color:#000;">2,500</span><span style="left:1089.50px;top:365.00px;font-size:13px;line-height:13px;color:#000;">$</span><span style="left:1129.97px;top:365.00px;font-size:13px;line-height:13px;color:#000;">2,500</span><span style="left:1178.50px;top:365.00px;font-size:13px;line-height:13px;color:#000;">$</span><span style="left:1218.97px;top:365.00px;font-size:13px;line-height:13px;color:#000;">2,500</span><span style="left:1267.50px;top:365.00px;font-size:13px;line-height:13px;color:#000;">$</span><span style="left:1307.97px;top:365.00px;font-size:13px;line-height:13px;color:#000;">2,500</span><span style="left:1356.50px;top:365.00px;font-size:13px;line-height:13px;color:#000;">$</span><span style="left:1396.97px;top:365.00px;font-size:13px;line-height:13px;color:#000;">2,500</span><span style="left:1445.50px;top:365.00px;font-size:13px;line-height:13px;color:#000;">$</span><span style="left:1485.97px;top:365.00px;font-size:13px;line-height:13px;color:#000;">2,500</span><span style="left:1534.50px;top:365.00px;font-size:13px;line-height:13px;color:#000;">$</span><span style="left:1574.97px;top:365.00px;font-size:13px;line-height:13px;color:#000;">2,625</span><span style="left:1623.50px;top:365.00px;font-size:13px;line-height:13px;color:#000;">$</span><span style="left:1663.97px;top:365.00px;font-size:13px;line-height:13px;color:#000;">2,625</span><span style="left:1712.50px;top:365.00px;font-size:13px;line-height:13px;color:#000;">$</span><span style="left:1752.97px;top:365.00px;font-size:13px;line-height:13px;color:#000;">2,625</span><span style="left:1801.50px;top:365.00px;font-size:13px;line-height:13px;color:#000;">$</span><span style="left:1841.97px;top:365.00px;font-size:13px;line-height:13px;color:#000;">2,625</span><span style="left:96.60px;top:384.00px;font-size:13px;line-height:13px;color:#000;letter-spacing:0.054px;">Cleaner 1</span><span style="left:466.50px;top:384.00px;font-size:13px;line-height:13px;color:#000;">$</span><span style="left:506.97px;top:384.00px;font-size:13px;line-height:13px;color:#000;">2,500</span><span style="left:555.50px;top:384.00px;font-size:13px;line-height:13px;color:#000;">$</span><span style="left:595.97px;top:384.00px;font-size:13px;line-height:13px;color:#000;">2,500</span><span style="left:644.50px;top:384.00px;font-size:13px;line-height:13px;color:#000;">$</span><span style="left:684.97px;top:384.00px;font-size:13px;line-height:13px;color:#000;">2,500</span><span style="left:733.50px;top:384.00px;font-size:13px;line-height:13px;color:#000;">$</span><span style="left:773.97px;top:384.00px;font-size:13px;line-height:13px;color:#000;">2,500</span><span style="left:822.50px;top:384.00px;font-size:13px;line-height:13px;color:#000;">$</span><span style="left:862.97px;top:384.00px;font-size:13px;line-height:13px;color:#000;">2,500</span><span style="left:911.50px;top:384.00px;font-size:13px;line-height:13px;color:#000;">$</span><span style="left:951.97px;top:384.00px;font-size:13px;line-height:13px;color:#000;">2,500</span><span style="left:1000.50px;top:384.00px;font-size:13px;line-height:13px;color:#000;">$</span><span style="left:1040.97px;top:384.00px;font-size:13px;line-height:13px;color:#000;">2,500</span><span style="left:1089.50px;top:384.00px;font-size:13px;line-height:13px;color:#000;">$</span><span style="left:1129.97px;top:384.00px;font-size:13px;line-height:13px;color:#000;">2,500</span><span style="left:1178.50px;top:384.00px;font-size:13px;line-height:13px;color:#000;">$</span><span style="left:1218.97px;top:384.00px;font-size:13px;line-height:13px;color:#000;">2,500</span><span style="left:1267.50px;top:384.00px;font-size:13px;line-height:13px;color:#000;">$</span><span style="left:1307.97px;top:384.00px;font-size:13px;line-height:13px;color:#000;">2,500</span><span style="left:1356.50px;top:384.00px;font-size:13px;line-height:13px;color:#000;">$</span><span style="left:1396.97px;top:384.00px;font-size:13px;line-height:13px;color:#000;">2,500</span><span style="left:1445.50px;top:384.00px;font-size:13px;line-height:13px;color:#000;">$</span><span style="left:1485.97px;top:384.00px;font-size:13px;line-height:13px;color:#000;">2,500</span><span style="left:1534.50px;top:384.00px;font-size:13px;line-height:13px;color:#000;">$</span><span style="left:1574.97px;top:384.00px;font-size:13px;line-height:13px;color:#000;">2,625</span><span style="left:1623.50px;top:384.00px;font-size:13px;line-height:13px;color:#000;">$</span><span style="left:1663.97px;top:384.00px;font-size:13px;line-height:13px;color:#000;">2,625</span><span style="left:1712.50px;top:384.00px;font-size:13px;line-height:13px;color:#000;">$</span><span style="left:1752.97px;top:384.00px;font-size:13px;line-height:13px;color:#000;">2,625</span><span style="left:1801.50px;top:384.00px;font-size:13px;line-height:13px;color:#000;">$</span><span style="left:1841.97px;top:384.00px;font-size:13px;line-height:13px;color:#000;">2,625</span><span style="left:96.60px;top:403.00px;font-size:13px;line-height:13px;color:#000;letter-spacing:0.104px;">Cleaner 2</span><span style="left:466.50px;top:403.00px;font-size:13px;line-height:13px;color:#000;">$</span><span style="left:506.97px;top:403.00px;font-size:13px;line-height:13px;color:#000;">2,500</span><span style="left:555.50px;top:403.00px;font-size:13px;line-height:13px;color:#000;">$</span><span style="left:595.97px;top:403.00px;font-size:13px;line-height:13px;color:#000;">2,500</span><span style="left:644.50px;top:403.00px;font-size:13px;line-height:13px;color:#000;">$</span><span style="left:684.97px;top:403.00px;font-size:13px;line-height:13px;color:#000;">2,500</span><span style="left:733.50px;top:403.00px;font-size:13px;line-height:13px;color:#000;">$</span><span style="left:773.97px;top:403.00px;font-size:13px;line-height:13px;color:#000;">2,500</span><span style="left:822.50px;top:403.00px;font-size:13px;line-height:13px;color:#000;">$</span><span style="left:862.97px;top:403.00px;font-size:13px;line-height:13px;color:#000;">2,500</span><span style="left:911.50px;top:403.00px;font-size:13px;line-height:13px;color:#000;">$</span><span style="left:951.97px;top:403.00px;font-size:13px;line-height:13px;color:#000;">2,500</span><span style="left:1000.50px;top:403.00px;font-size:13px;line-height:13px;color:#000;">$</span><span style="left:1040.97px;top:403.00px;font-size:13px;line-height:13px;color:#000;">2,500</span><span style="left:1089.50px;top:403.00px;font-size:13px;line-height:13px;color:#000;">$</span><span style="left:1129.97px;top:403.00px;font-size:13px;line-height:13px;color:#000;">2,500</span><span style="left:1178.50px;top:403.00px;font-size:13px;line-height:13px;color:#000;">$</span><span style="left:1218.97px;top:403.00px;font-size:13px;line-height:13px;color:#000;">2,500</span><span style="left:1267.50px;top:403.00px;font-size:13px;line-height:13px;color:#000;">$</span><span style="left:1307.97px;top:403.00px;font-size:13px;line-height:13px;color:#000;">2,500</span><span style="left:1356.50px;top:403.00px;font-size:13px;line-height:13px;color:#000;">$</span><span style="left:1396.97px;top:403.00px;font-size:13px;line-height:13px;color:#000;">2,500</span><span style="left:1445.50px;top:403.00px;font-size:13px;line-height:13px;color:#000;">$</span><span style="left:1485.97px;top:403.00px;font-size:13px;line-height:13px;color:#000;">2,500</span><span style="left:1534.50px;top:403.00px;font-size:13px;line-height:13px;color:#000;">$</span><span style="left:1574.97px;top:403.00px;font-size:13px;line-height:13px;color:#000;">2,625</span><span style="left:1623.50px;top:403.00px;font-size:13px;line-height:13px;color:#000;">$</span><span style="left:1663.97px;top:403.00px;font-size:13px;line-height:13px;color:#000;">2,625</span><span style="left:1712.50px;top:403.00px;font-size:13px;line-height:13px;color:#000;">$</span><span style="left:1752.97px;top:403.00px;font-size:13px;line-height:13px;color:#000;">2,625</span><span style="left:1801.50px;top:403.00px;font-size:13px;line-height:13px;color:#000;">$</span><span style="left:1841.97px;top:403.00px;font-size:13px;line-height:13px;color:#000;">2,625</span><span style="left:96.60px;top:421.00px;font-size:13px;line-height:13px;color:#000;letter-spacing:0.054px;">Cleaner 3</span><span style="left:466.50px;top:421.00px;font-size:13px;line-height:13px;color:#000;">$</span><span style="left:506.97px;top:421.00px;font-size:13px;line-height:13px;color:#000;">2,500</span><span style="left:555.50px;top:421.00px;font-size:13px;line-height:13px;color:#000;">$</span><span style="left:595.97px;top:421.00px;font-size:13px;line-height:13px;color:#000;">2,500</span><span style="left:644.50px;top:421.00px;font-size:13px;line-height:13px;color:#000;">$</span><span style="left:684.97px;top:421.00px;font-size:13px;line-height:13px;color:#000;">2,500</span><span style="left:733.50px;top:421.00px;font-size:13px;line-height:13px;color:#000;">$</span><span style="left:773.97px;top:421.00px;font-size:13px;line-height:13px;color:#000;">2,500</span><span style="left:822.50px;top:421.00px;font-size:13px;line-height:13px;color:#000;">$</span><span style="left:862.97px;top:421.00px;font-size:13px;line-height:13px;color:#000;">2,500</span><span style="left:911.50px;top:421.00px;font-size:13px;line-height:13px;color:#000;">$</span><span style="left:951.97px;top:421.00px;font-size:13px;line-height:13px;color:#000;">2,500</span><span style="left:1000.50px;top:421.00px;font-size:13px;line-height:13px;color:#000;">$</span><span style="left:1040.97px;top:421.00px;font-size:13px;line-height:13px;color:#000;">2,500</span><span style="left:1089.50px;top:421.00px;font-size:13px;line-height:13px;color:#000;">$</span><span style="left:1129.97px;top:421.00px;font-size:13px;line-height:13px;color:#000;">2,500</span><span style="left:1178.50px;top:421.00px;font-size:13px;line-height:13px;color:#000;">$</span><span style="left:1218.97px;top:421.00px;font-size:13px;line-height:13px;color:#000;">2,500</span><span style="left:1267.50px;top:421.00px;font-size:13px;line-height:13px;color:#000;">$</span><span style="left:1307.97px;top:421.00px;font-size:13px;line-height:13px;color:#000;">2,500</span><span style="left:1356.50px;top:421.00px;font-size:13px;line-height:13px;color:#000;">$</span><span style="left:1396.97px;top:421.00px;font-size:13px;line-height:13px;color:#000;">2,500</span><span style="left:1445.50px;top:421.00px;font-size:13px;line-height:13px;color:#000;">$</span><span style="left:1485.97px;top:421.00px;font-size:13px;line-height:13px;color:#000;">2,500</span><span style="left:1534.50px;top:421.00px;font-size:13px;line-height:13px;color:#000;">$</span><span style="left:1574.97px;top:421.00px;font-size:13px;line-height:13px;color:#000;">2,625</span><span style="left:1623.50px;top:421.00px;font-size:13px;line-height:13px;color:#000;">$</span><span style="left:1663.97px;top:421.00px;font-size:13px;line-height:13px;color:#000;">2,625</span><span style="left:1712.50px;top:421.00px;font-size:13px;line-height:13px;color:#000;">$</span><span style="left:1752.97px;top:421.00px;font-size:13px;line-height:13px;color:#000;">2,625</span><span style="left:1801.50px;top:421.00px;font-size:13px;line-height:13px;color:#000;">$</span><span style="left:1841.97px;top:421.00px;font-size:13px;line-height:13px;color:#000;">2,625</span><span style="left:96.60px;top:439.00px;font-size:13px;line-height:13px;color:#000;letter-spacing:0.154px;">Security Guard</span><span style="left:466.50px;top:439.00px;font-size:13px;line-height:13px;color:#000;">$</span><span style="left:506.97px;top:439.00px;font-size:13px;line-height:13px;color:#000;">3,000</span><span style="left:555.50px;top:439.00px;font-size:13px;line-height:13px;color:#000;">$</span><span style="left:595.97px;top:439.00px;font-size:13px;line-height:13px;color:#000;">3,000</span><span style="left:644.50px;top:439.00px;font-size:13px;line-height:13px;color:#000;">$</span><span style="left:684.97px;top:439.00px;font-size:13px;line-height:13px;color:#000;">3,000</span><span style="left:733.50px;top:439.00px;font-size:13px;line-height:13px;color:#000;">$</span><span style="left:773.97px;top:439.00px;font-size:13px;line-height:13px;color:#000;">3,000</span><span style="left:822.50px;top:439.00px;font-size:13px;line-height:13px;color:#000;">$</span><span style="left:862.97px;top:439.00px;font-size:13px;line-height:13px;color:#000;">3,000</span><span style="left:911.50px;top:439.00px;font-size:13px;line-height:13px;color:#000;">$</span><span style="left:951.97px;top:439.00px;font-size:13px;line-height:13px;color:#000;">3,000</span><span style="left:1000.50px;top:439.00px;font-size:13px;line-height:13px;color:#000;">$</span><span style="left:1040.97px;top:439.00px;font-size:13px;line-height:13px;color:#000;">3,000</span><span style="left:1089.50px;top:439.00px;font-size:13px;line-height:13px;color:#000;">$</span><span style="left:1129.97px;top:439.00px;font-size:13px;line-height:13px;color:#000;">3,000</span><span style="left:1178.50px;top:439.00px;font-size:13px;line-height:13px;color:#000;">$</span><span style="left:1218.97px;top:439.00px;font-size:13px;line-height:13px;color:#000;">3,000</span><span style="left:1267.50px;top:439.00px;font-size:13px;line-height:13px;color:#000;">$</span><span style="left:1307.97px;top:439.00px;font-size:13px;line-height:13px;color:#000;">3,000</span><span style="left:1356.50px;top:439.00px;font-size:13px;line-height:13px;color:#000;">$</span><span style="left:1396.97px;top:439.00px;font-size:13px;line-height:13px;color:#000;">3,000</span><span style="left:1445.50px;top:439.00px;font-size:13px;line-height:13px;color:#000;">$</span><span style="left:1485.97px;top:439.00px;font-size:13px;line-height:13px;color:#000;">3,000</span><span style="left:1534.50px;top:439.00px;font-size:13px;line-height:13px;color:#000;">$</span><span style="left:1574.97px;top:439.00px;font-size:13px;line-height:13px;color:#000;">3,150</span><span style="left:1623.50px;top:439.00px;font-size:13px;line-height:13px;color:#000;">$</span><span style="left:1663.97px;top:439.00px;font-size:13px;line-height:13px;color:#000;">3,150</span><span style="left:1712.50px;top:439.00px;font-size:13px;line-height:13px;color:#000;">$</span><span style="left:1752.97px;top:439.00px;font-size:13px;line-height:13px;color:#000;">3,150</span><span style="left:1801.50px;top:439.00px;font-size:13px;line-height:13px;color:#000;">$</span><span style="left:1841.97px;top:439.00px;font-size:13px;line-height:13px;color:#000;">3,150</span><div style="left:458px;top:492px;width:1410px;height:21px;background:#efefef;"></div><div style="left:458px;top:492px;width:1410px;height:1px;background:#000;"></div><div style="left:458px;top:512px;width:1410px;height:1px;background:#000;"></div><span style="left:91.60px;top:497.00px;font-size:11.2px;line-height:11.2px;color:#000;font-weight:bold;font-style:italic;letter-spacing:-0.126px;">Total Cost</span><span style="left:466.50px;top:495.00px;font-size:13px;line-height:13px;color:#000;font-weight:bold;">$</span><span style="left:499.73px;top:495.00px;font-size:13px;line-height:13px;color:#000;font-weight:bold;">49,500</span><span style="left:555.50px;top:495.00px;font-size:13px;line-height:13px;color:#000;font-weight:bold;">$</span><span style="left:588.73px;top:495.00px;font-size:13px;line-height:13px;color:#000;font-weight:bold;">49,500</span><span style="left:644.50px;top:495.00px;font-size:13px;line-height:13px;color:#000;font-weight:bold;">$</span><span style="left:677.73px;top:495.00px;font-size:13px;line-height:13px;color:#000;font-weight:bold;">49,500</span><span style="left:733.50px;top:495.00px;font-size:13px;line-height:13px;color:#000;font-weight:bold;">$</span><span style="left:766.73px;top:495.00px;font-size:13px;line-height:13px;color:#000;font-weight:bold;">49,500</span><span style="left:822.50px;top:495.00px;font-size:13px;line-height:13px;color:#000;font-weight:bold;">$</span><span style="left:855.73px;top:495.00px;font-size:13px;line-height:13px;color:#000;font-weight:bold;">49,500</span><span style="left:911.50px;top:495.00px;font-size:13px;line-height:13px;color:#000;font-weight:bold;">$</span><span style="left:944.73px;top:495.00px;font-size:13px;line-height:13px;color:#000;font-weight:bold;">49,500</span><span style="left:1000.50px;top:495.00px;font-size:13px;line-height:13px;color:#000;font-weight:bold;">$</span><span style="left:1033.73px;top:495.00px;font-size:13px;line-height:13px;color:#000;font-weight:bold;">49,500</span><span style="left:1089.50px;top:495.00px;font-size:13px;line-height:13px;color:#000;font-weight:bold;">$</span><span style="left:1122.73px;top:495.00px;font-size:13px;line-height:13px;color:#000;font-weight:bold;">49,500</span><span style="left:1178.50px;top:495.00px;font-size:13px;line-height:13px;color:#000;font-weight:bold;">$</span><span style="left:1211.73px;top:495.00px;font-size:13px;line-height:13px;color:#000;font-weight:bold;">49,500</span><span style="left:1267.50px;top:495.00px;font-size:13px;line-height:13px;color:#000;font-weight:bold;">$</span><span style="left:1300.73px;top:495.00px;font-size:13px;line-height:13px;color:#000;font-weight:bold;">49,500</span><span style="left:1356.50px;top:495.00px;font-size:13px;line-height:13px;color:#000;font-weight:bold;">$</span><span style="left:1389.73px;top:495.00px;font-size:13px;line-height:13px;color:#000;font-weight:bold;">49,500</span><span style="left:1445.50px;top:495.00px;font-size:13px;line-height:13px;color:#000;font-weight:bold;">$</span><span style="left:1478.73px;top:495.00px;font-size:13px;line-height:13px;color:#000;font-weight:bold;">49,500</span><span style="left:1534.50px;top:495.00px;font-size:13px;line-height:13px;color:#000;font-weight:bold;">$</span><span style="left:1567.73px;top:495.00px;font-size:13px;line-height:13px;color:#000;font-weight:bold;">51,975</span><span style="left:1623.50px;top:495.00px;font-size:13px;line-height:13px;color:#000;font-weight:bold;">$</span><span style="left:1656.73px;top:495.00px;font-size:13px;line-height:13px;color:#000;font-weight:bold;">51,975</span><span style="left:1712.50px;top:495.00px;font-size:13px;line-height:13px;color:#000;font-weight:bold;">$</span><span style="left:1745.73px;top:495.00px;font-size:13px;line-height:13px;color:#000;font-weight:bold;">51,975</span><span style="left:1801.50px;top:495.00px;font-size:13px;line-height:13px;color:#000;font-weight:bold;">$</span><span style="left:1834.73px;top:495.00px;font-size:13px;line-height:13px;color:#000;font-weight:bold;">51,975</span><div style="left:458px;top:592px;width:1410px;height:101px;background:#efefef;"></div><span style="left:91.40px;top:597.00px;font-size:11.5px;line-height:11.5px;color:#000;letter-spacing:0.527px;">Operations</span><span style="left:466.50px;top:595.00px;font-size:13px;line-height:13px;color:#000;">$</span><span style="left:499.73px;top:595.00px;font-size:13px;line-height:13px;color:#000;">10,500</span><span style="left:555.50px;top:595.00px;font-size:13px;line-height:13px;color:#000;">$</span><span style="left:588.73px;top:595.00px;font-size:13px;line-height:13px;color:#000;">10,500</span><span style="left:644.50px;top:595.00px;font-size:13px;line-height:13px;color:#000;">$</span><span style="left:677.73px;top:595.00px;font-size:13px;line-height:13px;color:#000;">10,500</span><span style="left:733.50px;top:595.00px;font-size:13px;line-height:13px;color:#000;">$</span><span style="left:766.73px;top:595.00px;font-size:13px;line-height:13px;color:#000;">10,500</span><span style="left:822.50px;top:595.00px;font-size:13px;line-height:13px;color:#000;">$</span><span style="left:855.73px;top:595.00px;font-size:13px;line-height:13px;color:#000;">10,500</span><span style="left:911.50px;top:595.00px;font-size:13px;line-height:13px;color:#000;">$</span><span style="left:944.73px;top:595.00px;font-size:13px;line-height:13px;color:#000;">10,500</span><span style="left:1000.50px;top:595.00px;font-size:13px;line-height:13px;color:#000;">$</span><span style="left:1033.73px;top:595.00px;font-size:13px;line-height:13px;color:#000;">10,500</span><span style="left:1089.50px;top:595.00px;font-size:13px;line-height:13px;color:#000;">$</span><span style="left:1122.73px;top:595.00px;font-size:13px;line-height:13px;color:#000;">10,500</span><span style="left:1178.50px;top:595.00px;font-size:13px;line-height:13px;color:#000;">$</span><span style="left:1211.73px;top:595.00px;font-size:13px;line-height:13px;color:#000;">10,500</span><span style="left:1267.50px;top:595.00px;font-size:13px;line-height:13px;color:#000;">$</span><span style="left:1300.73px;top:595.00px;font-size:13px;line-height:13px;color:#000;">10,500</span><span style="left:1356.50px;top:595.00px;font-size:13px;line-height:13px;color:#000;">$</span><span style="left:1389.73px;top:595.00px;font-size:13px;line-height:13px;color:#000;">10,500</span><span style="left:1445.50px;top:595.00px;font-size:13px;line-height:13px;color:#000;">$</span><span style="left:1478.73px;top:595.00px;font-size:13px;line-height:13px;color:#000;">10,500</span><span style="left:1534.50px;top:595.00px;font-size:13px;line-height:13px;color:#000;">$</span><span style="left:1568.71px;top:595.00px;font-size:13px;line-height:13px;color:#000;">11,025</span><span style="left:1623.50px;top:595.00px;font-size:13px;line-height:13px;color:#000;">$</span><span style="left:1657.71px;top:595.00px;font-size:13px;line-height:13px;color:#000;">11,025</span><span style="left:1712.50px;top:595.00px;font-size:13px;line-height:13px;color:#000;">$</span><span style="left:1746.71px;top:595.00px;font-size:13px;line-height:13px;color:#000;">11,025</span><span style="left:1801.50px;top:595.00px;font-size:13px;line-height:13px;color:#000;">$</span><span style="left:1835.71px;top:595.00px;font-size:13px;line-height:13px;color:#000;">11,025</span><span style="left:91.40px;top:617.00px;font-size:11.5px;line-height:11.5px;color:#000;letter-spacing:0.399px;">Sales &amp; Marketing</span><span style="left:466.50px;top:615.00px;font-size:13px;line-height:13px;color:#000;">$</span><span style="left:506.97px;top:615.00px;font-size:13px;line-height:13px;color:#000;">5,000</span><span style="left:555.50px;top:615.00px;font-size:13px;line-height:13px;color:#000;">$</span><span style="left:595.97px;top:615.00px;font-size:13px;line-height:13px;color:#000;">5,000</span><span style="left:644.50px;top:615.00px;font-size:13px;line-height:13px;color:#000;">$</span><span style="left:684.97px;top:615.00px;font-size:13px;line-height:13px;color:#000;">5,000</span><span style="left:733.50px;top:615.00px;font-size:13px;line-height:13px;color:#000;">$</span><span style="left:773.97px;top:615.00px;font-size:13px;line-height:13px;color:#000;">5,000</span><span style="left:822.50px;top:615.00px;font-size:13px;line-height:13px;color:#000;">$</span><span style="left:862.97px;top:615.00px;font-size:13px;line-height:13px;color:#000;">5,000</span><span style="left:911.50px;top:615.00px;font-size:13px;line-height:13px;color:#000;">$</span><span style="left:951.97px;top:615.00px;font-size:13px;line-height:13px;color:#000;">5,000</span><span style="left:1000.50px;top:615.00px;font-size:13px;line-height:13px;color:#000;">$</span><span style="left:1040.97px;top:615.00px;font-size:13px;line-height:13px;color:#000;">5,000</span><span style="left:1089.50px;top:615.00px;font-size:13px;line-height:13px;color:#000;">$</span><span style="left:1129.97px;top:615.00px;font-size:13px;line-height:13px;color:#000;">5,000</span><span style="left:1178.50px;top:615.00px;font-size:13px;line-height:13px;color:#000;">$</span><span style="left:1218.97px;top:615.00px;font-size:13px;line-height:13px;color:#000;">5,000</span><span style="left:1267.50px;top:615.00px;font-size:13px;line-height:13px;color:#000;">$</span><span style="left:1307.97px;top:615.00px;font-size:13px;line-height:13px;color:#000;">5,000</span><span style="left:1356.50px;top:615.00px;font-size:13px;line-height:13px;color:#000;">$</span><span style="left:1396.97px;top:615.00px;font-size:13px;line-height:13px;color:#000;">5,000</span><span style="left:1445.50px;top:615.00px;font-size:13px;line-height:13px;color:#000;">$</span><span style="left:1485.97px;top:615.00px;font-size:13px;line-height:13px;color:#000;">5,000</span><span style="left:1534.50px;top:615.00px;font-size:13px;line-height:13px;color:#000;">$</span><span style="left:1574.97px;top:615.00px;font-size:13px;line-height:13px;color:#000;">5,250</span><span style="left:1623.50px;top:615.00px;font-size:13px;line-height:13px;color:#000;">$</span><span style="left:1663.97px;top:615.00px;font-size:13px;line-height:13px;color:#000;">5,250</span><span style="left:1712.50px;top:615.00px;font-size:13px;line-height:13px;color:#000;">$</span><span style="left:1752.97px;top:615.00px;font-size:13px;line-height:13px;color:#000;">5,250</span><span style="left:1801.50px;top:615.00px;font-size:13px;line-height:13px;color:#000;">$</span><span style="left:1841.97px;top:615.00px;font-size:13px;line-height:13px;color:#000;">5,250</span><span style="left:91.40px;top:637.00px;font-size:11.5px;line-height:11.5px;color:#000;letter-spacing:0.373px;">Finance &amp; Inventory Management</span><span style="left:466.50px;top:635.00px;font-size:13px;line-height:13px;color:#000;">$</span><span style="left:506.97px;top:635.00px;font-size:13px;line-height:13px;color:#000;">4,500</span><span style="left:555.50px;top:635.00px;font-size:13px;line-height:13px;color:#000;">$</span><span style="left:595.97px;top:635.00px;font-size:13px;line-height:13px;color:#000;">4,500</span><span style="left:644.50px;top:635.00px;font-size:13px;line-height:13px;color:#000;">$</span><span style="left:684.97px;top:635.00px;font-size:13px;line-height:13px;color:#000;">4,500</span><span style="left:733.50px;top:635.00px;font-size:13px;line-height:13px;color:#000;">$</span><span style="left:773.97px;top:635.00px;font-size:13px;line-height:13px;color:#000;">4,500</span><span style="left:822.50px;top:635.00px;font-size:13px;line-height:13px;color:#000;">$</span><span style="left:862.97px;top:635.00px;font-size:13px;line-height:13px;color:#000;">4,500</span><span style="left:911.50px;top:635.00px;font-size:13px;line-height:13px;color:#000;">$</span><span style="left:951.97px;top:635.00px;font-size:13px;line-height:13px;color:#000;">4,500</span><span style="left:1000.50px;top:635.00px;font-size:13px;line-height:13px;color:#000;">$</span><span style="left:1040.97px;top:635.00px;font-size:13px;line-height:13px;color:#000;">4,500</span><span style="left:1089.50px;top:635.00px;font-size:13px;line-height:13px;color:#000;">$</span><span style="left:1129.97px;top:635.00px;font-size:13px;line-height:13px;color:#000;">4,500</span><span style="left:1178.50px;top:635.00px;font-size:13px;line-height:13px;color:#000;">$</span><span style="left:1218.97px;top:635.00px;font-size:13px;line-height:13px;color:#000;">4,500</span><span style="left:1267.50px;top:635.00px;font-size:13px;line-height:13px;color:#000;">$</span><span style="left:1307.97px;top:635.00px;font-size:13px;line-height:13px;color:#000;">4,500</span><span style="left:1356.50px;top:635.00px;font-size:13px;line-height:13px;color:#000;">$</span><span style="left:1396.97px;top:635.00px;font-size:13px;line-height:13px;color:#000;">4,500</span><span style="left:1445.50px;top:635.00px;font-size:13px;line-height:13px;color:#000;">$</span><span style="left:1485.97px;top:635.00px;font-size:13px;line-height:13px;color:#000;">4,500</span><span style="left:1534.50px;top:635.00px;font-size:13px;line-height:13px;color:#000;">$</span><span style="left:1574.97px;top:635.00px;font-size:13px;line-height:13px;color:#000;">4,725</span><span style="left:1623.50px;top:635.00px;font-size:13px;line-height:13px;color:#000;">$</span><span style="left:1663.97px;top:635.00px;font-size:13px;line-height:13px;color:#000;">4,725</span><span style="left:1712.50px;top:635.00px;font-size:13px;line-height:13px;color:#000;">$</span><span style="left:1752.97px;top:635.00px;font-size:13px;line-height:13px;color:#000;">4,725</span><span style="left:1801.50px;top:635.00px;font-size:13px;line-height:13px;color:#000;">$</span><span style="left:1841.97px;top:635.00px;font-size:13px;line-height:13px;color:#000;">4,725</span><span style="left:91.40px;top:657.00px;font-size:11.5px;line-height:11.5px;color:#000;letter-spacing:0.351px;">Kitchen Department</span><span style="left:466.50px;top:655.00px;font-size:13px;line-height:13px;color:#000;">$</span><span style="left:499.73px;top:655.00px;font-size:13px;line-height:13px;color:#000;">22,000</span><span style="left:555.50px;top:655.00px;font-size:13px;line-height:13px;color:#000;">$</span><span style="left:588.73px;top:655.00px;font-size:13px;line-height:13px;color:#000;">22,000</span><span style="left:644.50px;top:655.00px;font-size:13px;line-height:13px;color:#000;">$</span><span style="left:677.73px;top:655.00px;font-size:13px;line-height:13px;color:#000;">22,000</span><span style="left:733.50px;top:655.00px;font-size:13px;line-height:13px;color:#000;">$</span><span style="left:766.73px;top:655.00px;font-size:13px;line-height:13px;color:#000;">22,000</span><span style="left:822.50px;top:655.00px;font-size:13px;line-height:13px;color:#000;">$</span><span style="left:855.73px;top:655.00px;font-size:13px;line-height:13px;color:#000;">22,000</span><span style="left:911.50px;top:655.00px;font-size:13px;line-height:13px;color:#000;">$</span><span style="left:944.73px;top:655.00px;font-size:13px;line-height:13px;color:#000;">22,000</span><span style="left:1000.50px;top:655.00px;font-size:13px;line-height:13px;color:#000;">$</span><span style="left:1033.73px;top:655.00px;font-size:13px;line-height:13px;color:#000;">22,000</span><span style="left:1089.50px;top:655.00px;font-size:13px;line-height:13px;color:#000;">$</span><span style="left:1122.73px;top:655.00px;font-size:13px;line-height:13px;color:#000;">22,000</span><span style="left:1178.50px;top:655.00px;font-size:13px;line-height:13px;color:#000;">$</span><span style="left:1211.73px;top:655.00px;font-size:13px;line-height:13px;color:#000;">22,000</span><span style="left:1267.50px;top:655.00px;font-size:13px;line-height:13px;color:#000;">$</span><span style="left:1300.73px;top:655.00px;font-size:13px;line-height:13px;color:#000;">22,000</span><span style="left:1356.50px;top:655.00px;font-size:13px;line-height:13px;color:#000;">$</span><span style="left:1389.73px;top:655.00px;font-size:13px;line-height:13px;color:#000;">22,000</span><span style="left:1445.50px;top:655.00px;font-size:13px;line-height:13px;color:#000;">$</span><span style="left:1478.73px;top:655.00px;font-size:13px;line-height:13px;color:#000;">22,000</span><span style="left:1534.50px;top:655.00px;font-size:13px;line-height:13px;color:#000;">$</span><span style="left:1567.73px;top:655.00px;font-size:13px;line-height:13px;color:#000;">23,100</span><span style="left:1623.50px;top:655.00px;font-size:13px;line-height:13px;color:#000;">$</span><span style="left:1656.73px;top:655.00px;font-size:13px;line-height:13px;color:#000;">23,100</span><span style="left:1712.50px;top:655.00px;font-size:13px;line-height:13px;color:#000;">$</span><span style="left:1745.73px;top:655.00px;font-size:13px;line-height:13px;color:#000;">23,100</span><span style="left:1801.50px;top:655.00px;font-size:13px;line-height:13px;color:#000;">$</span><span style="left:1834.73px;top:655.00px;font-size:13px;line-height:13px;color:#000;">23,100</span><span style="left:91.40px;top:677.00px;font-size:11.5px;line-height:11.5px;color:#000;letter-spacing:0.141px;">Customer Service</span><span style="left:466.50px;top:675.00px;font-size:13px;line-height:13px;color:#000;">$</span><span style="left:506.97px;top:675.00px;font-size:13px;line-height:13px;color:#000;">7,500</span><span style="left:555.50px;top:675.00px;font-size:13px;line-height:13px;color:#000;">$</span><span style="left:595.97px;top:675.00px;font-size:13px;line-height:13px;color:#000;">7,500</span><span style="left:644.50px;top:675.00px;font-size:13px;line-height:13px;color:#000;">$</span><span style="left:684.97px;top:675.00px;font-size:13px;line-height:13px;color:#000;">7,500</span><span style="left:733.50px;top:675.00px;font-size:13px;line-height:13px;color:#000;">$</span><span style="left:773.97px;top:675.00px;font-size:13px;line-height:13px;color:#000;">7,500</span><span style="left:822.50px;top:675.00px;font-size:13px;line-height:13px;color:#000;">$</span><span style="left:862.97px;top:675.00px;font-size:13px;line-height:13px;color:#000;">7,500</span><span style="left:911.50px;top:675.00px;font-size:13px;line-height:13px;color:#000;">$</span><span style="left:951.97px;top:675.00px;font-size:13px;line-height:13px;color:#000;">7,500</span><span style="left:1000.50px;top:675.00px;font-size:13px;line-height:13px;color:#000;">$</span><span style="left:1040.97px;top:675.00px;font-size:13px;line-height:13px;color:#000;">7,500</span><span style="left:1089.50px;top:675.00px;font-size:13px;line-height:13px;color:#000;">$</span><span style="left:1129.97px;top:675.00px;font-size:13px;line-height:13px;color:#000;">7,500</span><span style="left:1178.50px;top:675.00px;font-size:13px;line-height:13px;color:#000;">$</span><span style="left:1218.97px;top:675.00px;font-size:13px;line-height:13px;color:#000;">7,500</span><span style="left:1267.50px;top:675.00px;font-size:13px;line-height:13px;color:#000;">$</span><span style="left:1307.97px;top:675.00px;font-size:13px;line-height:13px;color:#000;">7,500</span><span style="left:1356.50px;top:675.00px;font-size:13px;line-height:13px;color:#000;">$</span><span style="left:1396.97px;top:675.00px;font-size:13px;line-height:13px;color:#000;">7,500</span><span style="left:1445.50px;top:675.00px;font-size:13px;line-height:13px;color:#000;">$</span><span style="left:1485.97px;top:675.00px;font-size:13px;line-height:13px;color:#000;">7,500</span><span style="left:1534.50px;top:675.00px;font-size:13px;line-height:13px;color:#000;">$</span><span style="left:1574.97px;top:675.00px;font-size:13px;line-height:13px;color:#000;">7,875</span><span style="left:1623.50px;top:675.00px;font-size:13px;line-height:13px;color:#000;">$</span><span style="left:1663.97px;top:675.00px;font-size:13px;line-height:13px;color:#000;">7,875</span><span style="left:1712.50px;top:675.00px;font-size:13px;line-height:13px;color:#000;">$</span><span style="left:1752.97px;top:675.00px;font-size:13px;line-height:13px;color:#000;">7,875</span><span style="left:1801.50px;top:675.00px;font-size:13px;line-height:13px;color:#000;">$</span><span style="left:1841.97px;top:675.00px;font-size:13px;line-height:13px;color:#000;">7,875</span><div style="left:458px;top:761px;width:1410px;height:122px;background:#efefef;"></div><span style="left:80.00px;top:772.00px;font-size:10px;line-height:10px;color:#9c9c9c;">2</span><span style="left:91.60px;top:769.00px;font-size:13px;line-height:13px;color:#000;letter-spacing:0.281px;">Rent</span><span style="left:466.50px;top:769.00px;font-size:13px;line-height:13px;color:#000;">$</span><span style="left:499.73px;top:769.00px;font-size:13px;line-height:13px;color:#000;">32,000</span><span style="left:555.50px;top:769.00px;font-size:13px;line-height:13px;color:#000;">$</span><span style="left:588.73px;top:769.00px;font-size:13px;line-height:13px;color:#000;">32,000</span><span style="left:644.50px;top:769.00px;font-size:13px;line-height:13px;color:#000;">$</span><span style="left:677.73px;top:769.00px;font-size:13px;line-height:13px;color:#000;">32,000</span><span style="left:733.50px;top:769.00px;font-size:13px;line-height:13px;color:#000;">$</span><span style="left:766.73px;top:769.00px;font-size:13px;line-height:13px;color:#000;">32,000</span><span style="left:822.50px;top:769.00px;font-size:13px;line-height:13px;color:#000;">$</span><span style="left:855.73px;top:769.00px;font-size:13px;line-height:13px;color:#000;">32,000</span><span style="left:911.50px;top:769.00px;font-size:13px;line-height:13px;color:#000;">$</span><span style="left:944.73px;top:769.00px;font-size:13px;line-height:13px;color:#000;">32,000</span><span style="left:1000.50px;top:769.00px;font-size:13px;line-height:13px;color:#000;">$</span><span style="left:1033.73px;top:769.00px;font-size:13px;line-height:13px;color:#000;">32,000</span><span style="left:1089.50px;top:769.00px;font-size:13px;line-height:13px;color:#000;">$</span><span style="left:1122.73px;top:769.00px;font-size:13px;line-height:13px;color:#000;">32,000</span><span style="left:1178.50px;top:769.00px;font-size:13px;line-height:13px;color:#000;">$</span><span style="left:1211.73px;top:769.00px;font-size:13px;line-height:13px;color:#000;">32,000</span><span style="left:1267.50px;top:769.00px;font-size:13px;line-height:13px;color:#000;">$</span><span style="left:1300.73px;top:769.00px;font-size:13px;line-height:13px;color:#000;">32,000</span><span style="left:1356.50px;top:769.00px;font-size:13px;line-height:13px;color:#000;">$</span><span style="left:1389.73px;top:769.00px;font-size:13px;line-height:13px;color:#000;">32,000</span><span style="left:1445.50px;top:769.00px;font-size:13px;line-height:13px;color:#000;">$</span><span style="left:1478.73px;top:769.00px;font-size:13px;line-height:13px;color:#000;">32,000</span><span style="left:1534.50px;top:769.00px;font-size:13px;line-height:13px;color:#000;">$</span><span style="left:1567.73px;top:769.00px;font-size:13px;line-height:13px;color:#000;">33,600</span><span style="left:1623.50px;top:769.00px;font-size:13px;line-height:13px;color:#000;">$</span><span style="left:1656.73px;top:769.00px;font-size:13px;line-height:13px;color:#000;">33,600</span><span style="left:1712.50px;top:769.00px;font-size:13px;line-height:13px;color:#000;">$</span><span style="left:1745.73px;top:769.00px;font-size:13px;line-height:13px;color:#000;">33,600</span><span style="left:1801.50px;top:769.00px;font-size:13px;line-height:13px;color:#000;">$</span><span style="left:1834.73px;top:769.00px;font-size:13px;line-height:13px;color:#000;">33,600</span><span style="left:80.00px;top:795.00px;font-size:10px;line-height:10px;color:#9c9c9c;">3</span><span style="left:91.60px;top:792.00px;font-size:13px;line-height:13px;color:#000;letter-spacing:0.200px;">Insurance</span><span style="left:466.50px;top:792.00px;font-size:13px;line-height:13px;color:#000;">$</span><span style="left:499.73px;top:792.00px;font-size:13px;line-height:13px;color:#000;">10,000</span><span style="left:555.50px;top:792.00px;font-size:13px;line-height:13px;color:#000;">$</span><span style="left:588.73px;top:792.00px;font-size:13px;line-height:13px;color:#000;">10,000</span><span style="left:644.50px;top:792.00px;font-size:13px;line-height:13px;color:#000;">$</span><span style="left:677.73px;top:792.00px;font-size:13px;line-height:13px;color:#000;">10,000</span><span style="left:733.50px;top:792.00px;font-size:13px;line-height:13px;color:#000;">$</span><span style="left:766.73px;top:792.00px;font-size:13px;line-height:13px;color:#000;">10,000</span><span style="left:822.50px;top:792.00px;font-size:13px;line-height:13px;color:#000;">$</span><span style="left:855.73px;top:792.00px;font-size:13px;line-height:13px;color:#000;">10,000</span><span style="left:911.50px;top:792.00px;font-size:13px;line-height:13px;color:#000;">$</span><span style="left:944.73px;top:792.00px;font-size:13px;line-height:13px;color:#000;">10,000</span><span style="left:1000.50px;top:792.00px;font-size:13px;line-height:13px;color:#000;">$</span><span style="left:1033.73px;top:792.00px;font-size:13px;line-height:13px;color:#000;">10,000</span><span style="left:1089.50px;top:792.00px;font-size:13px;line-height:13px;color:#000;">$</span><span style="left:1122.73px;top:792.00px;font-size:13px;line-height:13px;color:#000;">10,000</span><span style="left:1178.50px;top:792.00px;font-size:13px;line-height:13px;color:#000;">$</span><span style="left:1211.73px;top:792.00px;font-size:13px;line-height:13px;color:#000;">10,000</span><span style="left:1267.50px;top:792.00px;font-size:13px;line-height:13px;color:#000;">$</span><span style="left:1300.73px;top:792.00px;font-size:13px;line-height:13px;color:#000;">10,000</span><span style="left:1356.50px;top:792.00px;font-size:13px;line-height:13px;color:#000;">$</span><span style="left:1389.73px;top:792.00px;font-size:13px;line-height:13px;color:#000;">10,000</span><span style="left:1445.50px;top:792.00px;font-size:13px;line-height:13px;color:#000;">$</span><span style="left:1478.73px;top:792.00px;font-size:13px;line-height:13px;color:#000;">10,000</span><span style="left:1534.50px;top:792.00px;font-size:13px;line-height:13px;color:#000;">$</span><span style="left:1567.73px;top:792.00px;font-size:13px;line-height:13px;color:#000;">10,500</span><span style="left:1623.50px;top:792.00px;font-size:13px;line-height:13px;color:#000;">$</span><span style="left:1656.73px;top:792.00px;font-size:13px;line-height:13px;color:#000;">10,500</span><span style="left:1712.50px;top:792.00px;font-size:13px;line-height:13px;color:#000;">$</span><span style="left:1745.73px;top:792.00px;font-size:13px;line-height:13px;color:#000;">10,500</span><span style="left:1801.50px;top:792.00px;font-size:13px;line-height:13px;color:#000;">$</span><span style="left:1834.73px;top:792.00px;font-size:13px;line-height:13px;color:#000;">10,500</span><span style="left:80.00px;top:818.00px;font-size:10px;line-height:10px;color:#9c9c9c;">4</span><span style="left:91.60px;top:815.00px;font-size:13px;line-height:13px;color:#000;letter-spacing:0.583px;">Marketing &amp; Advertising</span><span style="left:466.50px;top:815.00px;font-size:13px;line-height:13px;color:#000;">$</span><span style="left:506.97px;top:815.00px;font-size:13px;line-height:13px;color:#000;">6,000</span><span style="left:555.50px;top:815.00px;font-size:13px;line-height:13px;color:#000;">$</span><span style="left:595.97px;top:815.00px;font-size:13px;line-height:13px;color:#000;">6,000</span><span style="left:644.50px;top:815.00px;font-size:13px;line-height:13px;color:#000;">$</span><span style="left:684.97px;top:815.00px;font-size:13px;line-height:13px;color:#000;">6,000</span><span style="left:733.50px;top:815.00px;font-size:13px;line-height:13px;color:#000;">$</span><span style="left:773.97px;top:815.00px;font-size:13px;line-height:13px;color:#000;">6,000</span><span style="left:822.50px;top:815.00px;font-size:13px;line-height:13px;color:#000;">$</span><span style="left:862.97px;top:815.00px;font-size:13px;line-height:13px;color:#000;">6,000</span><span style="left:911.50px;top:815.00px;font-size:13px;line-height:13px;color:#000;">$</span><span style="left:951.97px;top:815.00px;font-size:13px;line-height:13px;color:#000;">6,000</span><span style="left:1000.50px;top:815.00px;font-size:13px;line-height:13px;color:#000;">$</span><span style="left:1040.97px;top:815.00px;font-size:13px;line-height:13px;color:#000;">6,000</span><span style="left:1089.50px;top:815.00px;font-size:13px;line-height:13px;color:#000;">$</span><span style="left:1129.97px;top:815.00px;font-size:13px;line-height:13px;color:#000;">6,000</span><span style="left:1178.50px;top:815.00px;font-size:13px;line-height:13px;color:#000;">$</span><span style="left:1218.97px;top:815.00px;font-size:13px;line-height:13px;color:#000;">6,000</span><span style="left:1267.50px;top:815.00px;font-size:13px;line-height:13px;color:#000;">$</span><span style="left:1307.97px;top:815.00px;font-size:13px;line-height:13px;color:#000;">6,000</span><span style="left:1356.50px;top:815.00px;font-size:13px;line-height:13px;color:#000;">$</span><span style="left:1396.97px;top:815.00px;font-size:13px;line-height:13px;color:#000;">6,000</span><span style="left:1445.50px;top:815.00px;font-size:13px;line-height:13px;color:#000;">$</span><span style="left:1485.97px;top:815.00px;font-size:13px;line-height:13px;color:#000;">6,000</span><span style="left:1534.50px;top:815.00px;font-size:13px;line-height:13px;color:#000;">$</span><span style="left:1574.97px;top:815.00px;font-size:13px;line-height:13px;color:#000;">6,300</span><span style="left:1623.50px;top:815.00px;font-size:13px;line-height:13px;color:#000;">$</span><span style="left:1663.97px;top:815.00px;font-size:13px;line-height:13px;color:#000;">6,300</span><span style="left:1712.50px;top:815.00px;font-size:13px;line-height:13px;color:#000;">$</span><span style="left:1752.97px;top:815.00px;font-size:13px;line-height:13px;color:#000;">6,300</span><span style="left:1801.50px;top:815.00px;font-size:13px;line-height:13px;color:#000;">$</span><span style="left:1841.97px;top:815.00px;font-size:13px;line-height:13px;color:#000;">6,300</span><span style="left:80.00px;top:841.00px;font-size:10px;line-height:10px;color:#9c9c9c;">5</span><span style="left:91.60px;top:838.00px;font-size:13px;line-height:13px;color:#000;letter-spacing:0.325px;">Maintenance and Repairs</span><span style="left:466.50px;top:838.00px;font-size:13px;line-height:13px;color:#000;">$</span><span style="left:506.97px;top:838.00px;font-size:13px;line-height:13px;color:#000;">9,000</span><span style="left:555.50px;top:838.00px;font-size:13px;line-height:13px;color:#000;">$</span><span style="left:595.97px;top:838.00px;font-size:13px;line-height:13px;color:#000;">9,000</span><span style="left:644.50px;top:838.00px;font-size:13px;line-height:13px;color:#000;">$</span><span style="left:684.97px;top:838.00px;font-size:13px;line-height:13px;color:#000;">9,000</span><span style="left:733.50px;top:838.00px;font-size:13px;line-height:13px;color:#000;">$</span><span style="left:773.97px;top:838.00px;font-size:13px;line-height:13px;color:#000;">9,000</span><span style="left:822.50px;top:838.00px;font-size:13px;line-height:13px;color:#000;">$</span><span style="left:862.97px;top:838.00px;font-size:13px;line-height:13px;color:#000;">9,000</span><span style="left:911.50px;top:838.00px;font-size:13px;line-height:13px;color:#000;">$</span><span style="left:951.97px;top:838.00px;font-size:13px;line-height:13px;color:#000;">9,000</span><span style="left:1000.50px;top:838.00px;font-size:13px;line-height:13px;color:#000;">$</span><span style="left:1040.97px;top:838.00px;font-size:13px;line-height:13px;color:#000;">9,000</span><span style="left:1089.50px;top:838.00px;font-size:13px;line-height:13px;color:#000;">$</span><span style="left:1129.97px;top:838.00px;font-size:13px;line-height:13px;color:#000;">9,000</span><span style="left:1178.50px;top:838.00px;font-size:13px;line-height:13px;color:#000;">$</span><span style="left:1218.97px;top:838.00px;font-size:13px;line-height:13px;color:#000;">9,000</span><span style="left:1267.50px;top:838.00px;font-size:13px;line-height:13px;color:#000;">$</span><span style="left:1307.97px;top:838.00px;font-size:13px;line-height:13px;color:#000;">9,000</span><span style="left:1356.50px;top:838.00px;font-size:13px;line-height:13px;color:#000;">$</span><span style="left:1396.97px;top:838.00px;font-size:13px;line-height:13px;color:#000;">9,000</span><span style="left:1445.50px;top:838.00px;font-size:13px;line-height:13px;color:#000;">$</span><span style="left:1485.97px;top:838.00px;font-size:13px;line-height:13px;color:#000;">9,000</span><span style="left:1534.50px;top:838.00px;font-size:13px;line-height:13px;color:#000;">$</span><span style="left:1574.97px;top:838.00px;font-size:13px;line-height:13px;color:#000;">9,450</span><span style="left:1623.50px;top:838.00px;font-size:13px;line-height:13px;color:#000;">$</span><span style="left:1663.97px;top:838.00px;font-size:13px;line-height:13px;color:#000;">9,450</span><span style="left:1712.50px;top:838.00px;font-size:13px;line-height:13px;color:#000;">$</span><span style="left:1752.97px;top:838.00px;font-size:13px;line-height:13px;color:#000;">9,450</span><span style="left:1801.50px;top:838.00px;font-size:13px;line-height:13px;color:#000;">$</span><span style="left:1841.97px;top:838.00px;font-size:13px;line-height:13px;color:#000;">9,450</span><span style="left:80.00px;top:864.00px;font-size:10px;line-height:10px;color:#9c9c9c;">6</span><span style="left:91.60px;top:861.00px;font-size:13px;line-height:13px;color:#000;letter-spacing:0.800px;">Utilities</span><span style="left:466.50px;top:861.00px;font-size:13px;line-height:13px;color:#000;">$</span><span style="left:500.71px;top:861.00px;font-size:13px;line-height:13px;color:#000;">11,000</span><span style="left:555.50px;top:861.00px;font-size:13px;line-height:13px;color:#000;">$</span><span style="left:589.71px;top:861.00px;font-size:13px;line-height:13px;color:#000;">11,000</span><span style="left:644.50px;top:861.00px;font-size:13px;line-height:13px;color:#000;">$</span><span style="left:678.71px;top:861.00px;font-size:13px;line-height:13px;color:#000;">11,000</span><span style="left:733.50px;top:861.00px;font-size:13px;line-height:13px;color:#000;">$</span><span style="left:767.71px;top:861.00px;font-size:13px;line-height:13px;color:#000;">11,000</span><span style="left:822.50px;top:861.00px;font-size:13px;line-height:13px;color:#000;">$</span><span style="left:856.71px;top:861.00px;font-size:13px;line-height:13px;color:#000;">11,000</span><span style="left:911.50px;top:861.00px;font-size:13px;line-height:13px;color:#000;">$</span><span style="left:945.71px;top:861.00px;font-size:13px;line-height:13px;color:#000;">11,000</span><span style="left:1000.50px;top:861.00px;font-size:13px;line-height:13px;color:#000;">$</span><span style="left:1034.71px;top:861.00px;font-size:13px;line-height:13px;color:#000;">11,000</span><span style="left:1089.50px;top:861.00px;font-size:13px;line-height:13px;color:#000;">$</span><span style="left:1123.71px;top:861.00px;font-size:13px;line-height:13px;color:#000;">11,000</span><span style="left:1178.50px;top:861.00px;font-size:13px;line-height:13px;color:#000;">$</span><span style="left:1212.71px;top:861.00px;font-size:13px;line-height:13px;color:#000;">11,000</span><span style="left:1267.50px;top:861.00px;font-size:13px;line-height:13px;color:#000;">$</span><span style="left:1301.71px;top:861.00px;font-size:13px;line-height:13px;color:#000;">11,000</span><span style="left:1356.50px;top:861.00px;font-size:13px;line-height:13px;color:#000;">$</span><span style="left:1390.71px;top:861.00px;font-size:13px;line-height:13px;color:#000;">11,000</span><span style="left:1445.50px;top:861.00px;font-size:13px;line-height:13px;color:#000;">$</span><span style="left:1479.71px;top:861.00px;font-size:13px;line-height:13px;color:#000;">11,000</span><span style="left:1534.50px;top:861.00px;font-size:13px;line-height:13px;color:#000;">$</span><span style="left:1568.71px;top:861.00px;font-size:13px;line-height:13px;color:#000;">11,550</span><span style="left:1623.50px;top:861.00px;font-size:13px;line-height:13px;color:#000;">$</span><span style="left:1657.71px;top:861.00px;font-size:13px;line-height:13px;color:#000;">11,550</span><span style="left:1712.50px;top:861.00px;font-size:13px;line-height:13px;color:#000;">$</span><span style="left:1746.71px;top:861.00px;font-size:13px;line-height:13px;color:#000;">11,550</span><span style="left:1801.50px;top:861.00px;font-size:13px;line-height:13px;color:#000;">$</span><span style="left:1835.71px;top:861.00px;font-size:13px;line-height:13px;color:#000;">11,550</span><div style="left:338px;top:0px;width:1px;height:883px;background:#a6a6a6;"></div><div style="left:-2px;top:-2px;width:92px;height:44px;background:transparent;border:2px solid #1d6b3c;box-sizing:border-box;"></div></div><div style="left:25px;top:6px;width:89px;height:16px;background:#d2d2d2;"></div><span style="left:65.63px;top:7.00px;font-size:14px;line-height:14px;color:#1d6b3c;">A</span><div style="left:114px;top:6px;width:1px;height:16px;background:#bdbdbd;"></div><span style="left:235.13px;top:7.00px;font-size:14px;line-height:14px;color:#000;">B</span><div style="left:364px;top:6px;width:1px;height:16px;background:#bdbdbd;"></div><span style="left:419.75px;top:7.00px;font-size:14px;line-height:14px;color:#000;">C</span><div style="left:484px;top:6px;width:1px;height:16px;background:#bdbdbd;"></div><span style="left:524.25px;top:7.00px;font-size:14px;line-height:14px;color:#000;">D</span><div style="left:573px;top:6px;width:1px;height:16px;background:#bdbdbd;"></div><span style="left:613.63px;top:7.00px;font-size:14px;line-height:14px;color:#000;">E</span><div style="left:662px;top:6px;width:1px;height:16px;background:#bdbdbd;"></div><span style="left:703.02px;top:7.00px;font-size:14px;line-height:14px;color:#000;">F</span><div style="left:751px;top:6px;width:1px;height:16px;background:#bdbdbd;"></div><span style="left:790.85px;top:7.00px;font-size:14px;line-height:14px;color:#000;">G</span><div style="left:840px;top:6px;width:1px;height:16px;background:#bdbdbd;"></div><span style="left:880.25px;top:7.00px;font-size:14px;line-height:14px;color:#000;">H</span><div style="left:929px;top:6px;width:1px;height:16px;background:#bdbdbd;"></div><span style="left:972.35px;top:7.00px;font-size:14px;line-height:14px;color:#000;">I</span><div style="left:1018px;top:6px;width:1px;height:16px;background:#bdbdbd;"></div><span style="left:1059.80px;top:7.00px;font-size:14px;line-height:14px;color:#000;">J</span><div style="left:1107px;top:6px;width:1px;height:16px;background:#bdbdbd;"></div><span style="left:1147.63px;top:7.00px;font-size:14px;line-height:14px;color:#000;">K</span><div style="left:1196px;top:6px;width:1px;height:16px;background:#bdbdbd;"></div><span style="left:1237.41px;top:7.00px;font-size:14px;line-height:14px;color:#000;">L</span><div style="left:1285px;top:6px;width:1px;height:16px;background:#bdbdbd;"></div><span style="left:1324.47px;top:7.00px;font-size:14px;line-height:14px;color:#000;">M</span><div style="left:1374px;top:6px;width:1px;height:16px;background:#bdbdbd;"></div><span style="left:1414.25px;top:7.00px;font-size:14px;line-height:14px;color:#000;">N</span><div style="left:1463px;top:6px;width:1px;height:16px;background:#bdbdbd;"></div><span style="left:1502.85px;top:7.00px;font-size:14px;line-height:14px;color:#000;">O</span><div style="left:1552px;top:6px;width:1px;height:16px;background:#bdbdbd;"></div><span style="left:1592.63px;top:7.00px;font-size:14px;line-height:14px;color:#000;">P</span><div style="left:1641px;top:6px;width:1px;height:16px;background:#bdbdbd;"></div><span style="left:1680.85px;top:7.00px;font-size:14px;line-height:14px;color:#000;">Q</span><div style="left:1730px;top:6px;width:1px;height:16px;background:#bdbdbd;"></div><span style="left:1770.25px;top:7.00px;font-size:14px;line-height:14px;color:#000;">R</span><div style="left:1819px;top:6px;width:1px;height:16px;background:#bdbdbd;"></div><span style="left:1859.63px;top:7.00px;font-size:14px;line-height:14px;color:#000;">S</span><div style="left:1908px;top:6px;width:1px;height:16px;background:#bdbdbd;"></div><div style="left:114px;top:6px;width:1px;height:16px;background:#b0b0b0;"></div><div style="left:364px;top:6px;width:1px;height:16px;background:#a0a0a0;"></div><div style="left:0px;top:22px;width:1894px;height:1px;background:#ababab;"></div><svg style="position:absolute;left:0;top:0" width="25" height="22"><polygon points="22,10 22,19 13,19" fill="#b4b4b4"/></svg><div style="left:25px;top:6px;width:1px;height:900px;background:#a6a6a6;"></div><div style="left:0px;top:23px;width:25px;height:40px;background:#d2d2d2;"></div><div style="left:0px;top:63px;width:25px;height:1px;background:#c6c6c6;"></div><span style="left:9.10px;top:49.00px;font-size:13.3px;line-height:13.3px;color:#1d6b3c;letter-spacing:-0.300px;">1</span><div style="left:0px;top:83px;width:25px;height:1px;background:#c6c6c6;"></div><span style="left:9.10px;top:69.00px;font-size:13.3px;line-height:13.3px;color:#000;letter-spacing:-0.300px;">2</span><div style="left:0px;top:104px;width:25px;height:1px;background:#c6c6c6;"></div><span style="left:9.10px;top:90.00px;font-size:13.3px;line-height:13.3px;color:#000;letter-spacing:-0.300px;">3</span><div style="left:0px;top:137px;width:25px;height:1px;background:#c6c6c6;"></div><span style="left:9.10px;top:120.00px;font-size:13.3px;line-height:13.3px;color:#000;letter-spacing:-0.300px;">4</span><div style="left:0px;top:163px;width:25px;height:1px;background:#c6c6c6;"></div><span style="left:9.10px;top:146.00px;font-size:13.3px;line-height:13.3px;color:#000;letter-spacing:-0.300px;">5</span><div style="left:0px;top:196px;width:25px;height:1px;background:#c6c6c6;"></div><span style="left:9.10px;top:179.00px;font-size:13.3px;line-height:13.3px;color:#000;letter-spacing:-0.300px;">6</span><div style="left:0px;top:215px;width:25px;height:1px;background:#c6c6c6;"></div><span style="left:9.10px;top:198.00px;font-size:13.3px;line-height:13.3px;color:#000;letter-spacing:-0.300px;">7</span><div style="left:0px;top:234px;width:25px;height:1px;background:#c6c6c6;"></div><span style="left:9.10px;top:217.00px;font-size:13.3px;line-height:13.3px;color:#000;letter-spacing:-0.300px;">8</span><div style="left:0px;top:253px;width:25px;height:1px;background:#c6c6c6;"></div><span style="left:9.10px;top:236.00px;font-size:13.3px;line-height:13.3px;color:#000;letter-spacing:-0.300px;">9</span><div style="left:0px;top:272px;width:25px;height:1px;background:#c6c6c6;"></div><span style="left:5.56px;top:255.00px;font-size:13.3px;line-height:13.3px;color:#000;letter-spacing:-0.300px;">10</span><div style="left:0px;top:291px;width:25px;height:1px;background:#c6c6c6;"></div><span style="left:6.05px;top:274.00px;font-size:13.3px;line-height:13.3px;color:#000;letter-spacing:-0.300px;">11</span><div style="left:0px;top:310px;width:25px;height:1px;background:#c6c6c6;"></div><span style="left:5.56px;top:293.00px;font-size:13.3px;line-height:13.3px;color:#000;letter-spacing:-0.300px;">12</span><div style="left:0px;top:329px;width:25px;height:1px;background:#c6c6c6;"></div><span style="left:5.56px;top:312.00px;font-size:13.3px;line-height:13.3px;color:#000;letter-spacing:-0.300px;">13</span><div style="left:0px;top:348px;width:25px;height:1px;background:#c6c6c6;"></div><span style="left:5.56px;top:331.00px;font-size:13.3px;line-height:13.3px;color:#000;letter-spacing:-0.300px;">14</span><div style="left:0px;top:367px;width:25px;height:1px;background:#c6c6c6;"></div><span style="left:5.56px;top:350.00px;font-size:13.3px;line-height:13.3px;color:#000;letter-spacing:-0.300px;">15</span><div style="left:0px;top:386px;width:25px;height:1px;background:#c6c6c6;"></div><span style="left:5.56px;top:369.00px;font-size:13.3px;line-height:13.3px;color:#000;letter-spacing:-0.300px;">16</span><div style="left:0px;top:405px;width:25px;height:1px;background:#c6c6c6;"></div><span style="left:5.56px;top:388.00px;font-size:13.3px;line-height:13.3px;color:#000;letter-spacing:-0.300px;">17</span><div style="left:0px;top:424px;width:25px;height:1px;background:#c6c6c6;"></div><span style="left:5.56px;top:407.00px;font-size:13.3px;line-height:13.3px;color:#000;letter-spacing:-0.300px;">18</span><div style="left:0px;top:443px;width:25px;height:1px;background:#c6c6c6;"></div><span style="left:5.56px;top:426.00px;font-size:13.3px;line-height:13.3px;color:#000;letter-spacing:-0.300px;">19</span><div style="left:0px;top:461px;width:25px;height:1px;background:#c6c6c6;"></div><span style="left:5.56px;top:444.00px;font-size:13.3px;line-height:13.3px;color:#000;letter-spacing:-0.300px;">20</span><div style="left:0px;top:479px;width:25px;height:1px;background:#c6c6c6;"></div><span style="left:5.56px;top:462.00px;font-size:13.3px;line-height:13.3px;color:#000;letter-spacing:-0.300px;">21</span><div style="left:0px;top:497px;width:25px;height:1px;background:#c6c6c6;"></div><span style="left:5.56px;top:480.00px;font-size:13.3px;line-height:13.3px;color:#000;letter-spacing:-0.300px;">22</span><div style="left:0px;top:515px;width:25px;height:1px;background:#c6c6c6;"></div><span style="left:5.56px;top:498.00px;font-size:13.3px;line-height:13.3px;color:#000;letter-spacing:-0.300px;">23</span><div style="left:0px;top:535px;width:25px;height:1px;background:#c6c6c6;"></div><span style="left:5.56px;top:518.00px;font-size:13.3px;line-height:13.3px;color:#000;letter-spacing:-0.300px;">24</span><div style="left:0px;top:555px;width:25px;height:1px;background:#c6c6c6;"></div><span style="left:5.56px;top:538.00px;font-size:13.3px;line-height:13.3px;color:#000;letter-spacing:-0.300px;">25</span><div style="left:0px;top:575px;width:25px;height:1px;background:#c6c6c6;"></div><span style="left:5.56px;top:558.00px;font-size:13.3px;line-height:13.3px;color:#000;letter-spacing:-0.300px;">26</span><div style="left:0px;top:595px;width:25px;height:1px;background:#c6c6c6;"></div><span style="left:5.56px;top:578.00px;font-size:13.3px;line-height:13.3px;color:#000;letter-spacing:-0.300px;">27</span><div style="left:0px;top:615px;width:25px;height:1px;background:#c6c6c6;"></div><span style="left:5.56px;top:598.00px;font-size:13.3px;line-height:13.3px;color:#000;letter-spacing:-0.300px;">28</span><div style="left:0px;top:635px;width:25px;height:1px;background:#c6c6c6;"></div><span style="left:5.56px;top:618.00px;font-size:13.3px;line-height:13.3px;color:#000;letter-spacing:-0.300px;">29</span><div style="left:0px;top:655px;width:25px;height:1px;background:#c6c6c6;"></div><span style="left:5.56px;top:638.00px;font-size:13.3px;line-height:13.3px;color:#000;letter-spacing:-0.300px;">30</span><div style="left:0px;top:675px;width:25px;height:1px;background:#c6c6c6;"></div><span style="left:5.56px;top:658.00px;font-size:13.3px;line-height:13.3px;color:#000;letter-spacing:-0.300px;">31</span><div style="left:0px;top:695px;width:25px;height:1px;background:#c6c6c6;"></div><span style="left:5.56px;top:678.00px;font-size:13.3px;line-height:13.3px;color:#000;letter-spacing:-0.300px;">32</span><div style="left:0px;top:715px;width:25px;height:1px;background:#c6c6c6;"></div><span style="left:5.56px;top:698.00px;font-size:13.3px;line-height:13.3px;color:#000;letter-spacing:-0.300px;">33</span><div style="left:0px;top:735px;width:25px;height:1px;background:#c6c6c6;"></div><span style="left:5.56px;top:718.00px;font-size:13.3px;line-height:13.3px;color:#000;letter-spacing:-0.300px;">34</span><div style="left:0px;top:758px;width:25px;height:1px;background:#c6c6c6;"></div><span style="left:5.56px;top:741.00px;font-size:13.3px;line-height:13.3px;color:#000;letter-spacing:-0.300px;">35</span><div style="left:0px;top:784px;width:25px;height:1px;background:#c6c6c6;"></div><span style="left:5.56px;top:767.00px;font-size:13.3px;line-height:13.3px;color:#000;letter-spacing:-0.300px;">36</span><div style="left:0px;top:807px;width:25px;height:1px;background:#c6c6c6;"></div><span style="left:5.56px;top:791.00px;font-size:13.3px;line-height:13.3px;color:#000;letter-spacing:-0.300px;">37</span><div style="left:0px;top:830px;width:25px;height:1px;background:#c6c6c6;"></div><span style="left:5.56px;top:814.00px;font-size:13.3px;line-height:13.3px;color:#000;letter-spacing:-0.300px;">38</span><div style="left:0px;top:853px;width:25px;height:1px;background:#c6c6c6;"></div><span style="left:5.56px;top:837.00px;font-size:13.3px;line-height:13.3px;color:#000;letter-spacing:-0.300px;">39</span><div style="left:0px;top:876px;width:25px;height:1px;background:#c6c6c6;"></div><span style="left:5.56px;top:860.00px;font-size:13.3px;line-height:13.3px;color:#000;letter-spacing:-0.300px;">40</span><div style="left:0px;top:899px;width:25px;height:1px;background:#c6c6c6;"></div><span style="left:5.56px;top:883.00px;font-size:13.3px;line-height:13.3px;color:#000;letter-spacing:-0.300px;">41</span><div style="left:25px;top:22px;width:1px;height:884px;background:#a6a6a6;"></div><div style="left:24px;top:21px;width:2px;height:44px;background:#1d6b3c;"></div><div style="left:0px;top:906px;width:1895px;height:1px;background:#a0a0a0;"></div><div style="left:1894px;top:22px;width:1px;height:884px;background:#a0a0a0;"></div><div style="left:24px;top:21px;width:92px;height:44px;background:transparent;border:2px solid #1d6b3c;box-sizing:border-box;"></div><div style="left:26px;top:23px;width:88px;height:40px;background:transparent;border:1px solid #fff;box-sizing:border-box;"></div><div style="left:112px;top:61px;width:5px;height:5px;background:#1d6b3c;outline:1px solid #fff;"></div><div style="left:1894px;top:0px;width:24px;height:907px;background:#e6e6e6;"></div><div style="left:1898px;top:27px;width:19px;height:860px;background:#f0f0f0;"></div><div style="left:1894px;top:22px;width:1px;height:885px;background:#a0a0a0;"></div><div style="left:1898px;top:8px;width:19px;height:18px;background:#fff;border:1px solid #a0a0a0;box-sizing:border-box;"></div><svg style="position:absolute;left:1898px;top:8px" width="19" height="18"><polygon points="5,11 14,11 9.5,6" fill="#222"/></svg><div style="left:1898px;top:26px;width:19px;height:34px;background:#fff;border:1px solid #a0a0a0;border-top-width:2px;box-sizing:border-box;"></div><div style="left:1898px;top:887px;width:19px;height:19px;background:#fff;border:1px solid #a0a0a0;box-sizing:border-box;"></div><svg style="position:absolute;left:1898px;top:887px" width="19" height="19"><polygon points="5,7 14,7 9.5,12" fill="#222"/></svg><div style="left:1918px;top:0px;width:2px;height:966px;background:#d8d8d8;"></div><div style="left:1920px;top:0px;width:1px;height:966px;background:#000;"></div><div style="left:0px;top:907px;width:1918px;height:31px;background:#e6e6e6;"></div><div style="left:0px;top:938px;width:1918px;height:1px;background:#c8c8c8;"></div><svg style="position:absolute;left:0;top:906px" width="112" height="32"><polygon points="35.6,11.5 35.6,21 30,16.2" fill="#106b35"/><polygon points="62,11.5 62,21 67.6,16.2" fill="#106b35"/><rect x="90" y="17" width="2.6" height="2.8" fill="#106b35"/><rect x="95" y="17" width="2.6" height="2.8" fill="#106b35"/><rect x="100" y="17" width="2.6" height="2.8" fill="#106b35"/></svg><span style="left:126.90px;top:912.00px;font-size:17px;line-height:17px;color:#444;letter-spacing:0.114px;">Input Sheet</span><span style="left:245.50px;top:912.00px;font-size:17px;line-height:17px;color:#444;letter-spacing:0.035px;">Investment Summary</span><span style="left:439.30px;top:912.00px;font-size:17px;line-height:17px;color:#444;letter-spacing:-0.389px;">Revenue Analysis</span><span style="left:600.40px;top:912.00px;font-size:17px;line-height:17px;color:#444;letter-spacing:-0.129px;">Financial Statements</span><span style="left:790.50px;top:912.00px;font-size:17px;line-height:17px;color:#444;letter-spacing:-0.277px;">Financial Analysis</span><div style="left:112px;top:910px;width:1px;height:24px;background:#a8a8a8;"></div><div style="left:229px;top:910px;width:1px;height:24px;background:#a8a8a8;"></div><div style="left:424px;top:910px;width:1px;height:24px;background:#a8a8a8;"></div><div style="left:584px;top:910px;width:1px;height:24px;background:#a8a8a8;"></div><div style="left:774px;top:910px;width:1px;height:24px;background:#a8a8a8;"></div><div style="left:937px;top:906px;width:102px;height:29px;background:#ffffff;border-left:1px solid #9c9c9c;border-right:1px solid #9c9c9c;box-sizing:border-box;"></div><div style="left:937px;top:933px;width:102px;height:2px;background:#106b35;"></div><span style="left:949.50px;top:912.00px;font-size:17px;line-height:17px;color:#1a6e3c;font-weight:bold;letter-spacing:-0.049px;">Workings</span><span style="left:1052.50px;top:912.00px;font-size:17px;line-height:17px;color:#444;letter-spacing:-2.543px;">Da</span><div style="left:1081.5px;top:923.5px;width:2.4px;height:2.6px;background:#106b35;"></div><div style="left:1087px;top:923.5px;width:2.4px;height:2.6px;background:#106b35;"></div><div style="left:1092.5px;top:923.5px;width:2.4px;height:2.6px;background:#106b35;"></div><svg style="position:absolute;left:1108px;top:911px" width="24" height="24"><circle cx="12" cy="12" r="9.3" fill="none" stroke="#6a6a6a" stroke-width="1.2"/><path d="M12 7.2V16.8M7.2 12H16.8" stroke="#555" stroke-width="1.4"/></svg><div style="left:1150px;top:916px;width:2.5px;height:2.5px;background:#a0a0a0;"></div><div style="left:1150px;top:921px;width:2.5px;height:2.5px;background:#a0a0a0;"></div><div style="left:1150px;top:926px;width:2.5px;height:2.5px;background:#a0a0a0;"></div><div style="left:1170px;top:913px;width:704px;height:19px;background:#f0f0f0;"></div><div style="left:1170px;top:913px;width:19px;height:19px;background:#fff;border:1px solid #a0a0a0;box-sizing:border-box;"></div><svg style="position:absolute;left:1170px;top:913px" width="19" height="19"><polygon points="12,5 12,14 7,9.5" fill="#222"/></svg><div style="left:1188px;top:913px;width:191px;height:19px;background:#fff;border:1px solid #a0a0a0;box-sizing:border-box;"></div><div style="left:1874px;top:913px;width:19px;height:19px;background:#fff;border:1px solid #a0a0a0;box-sizing:border-box;"></div><svg style="position:absolute;left:1874px;top:913px" width="19" height="19"><polygon points="7,5 7,14 12,9.5" fill="#222"/></svg><div style="left:0px;top:939px;width:1918px;height:27px;background:#f3f3f3;"></div><span style="left:14.60px;top:946.00px;font-size:13px;line-height:13px;color:#333;letter-spacing:-0.571px;">Ready</span><span style="left:71.80px;top:946.00px;font-size:13px;line-height:13px;color:#333;letter-spacing:-0.450px;">Calculate</span><svg style="position:absolute;left:148px;top:942px" width="20" height="20"><path d="M3.5 6.5V16.3H16.4V3.2" fill="#fff" stroke="#555" stroke-width="1.1"/><rect x="3.5" y="6.5" width="12.9" height="9.8" fill="#fff"/><path d="M3.5 6.5V16.3H16.4V3.2" fill="none" stroke="#555" stroke-width="1.1"/><rect x="10" y="3" width="6.9" height="3.5" fill="#555"/><circle cx="5.4" cy="5.2" r="3.4" fill="#555"/><g fill="#555"><rect x="9.4" y="8" width="1.4" height="1"/><rect x="12.4" y="8" width="1.6" height="1"/><rect x="6.2" y="10.9" width="1.6" height="1"/><rect x="9.4" y="10.9" width="1.4" height="1"/><rect x="12.4" y="10.9" width="1.6" height="1"/><rect x="6.2" y="13.8" width="1.6" height="1"/><rect x="9.4" y="13.8" width="1.4" height="1"/><rect x="12.4" y="13.8" width="1.6" height="1"/></g></svg><svg style="position:absolute;left:187px;top:942px" width="22" height="24"><path d="M8.5 3.3 A7 7 0 0 0 8.8 17.3" fill="none" stroke="#444" stroke-width="1.1" stroke-dasharray="2.3 1.2"/><path d="M9.5 2V9.8" stroke="#444" stroke-width="1"/><path d="M7.2 8 L9.5 10.8 L11.8 8Z" fill="#444"/><path d="M13 8.3H16.3" stroke="#444" stroke-width="1.1"/><path d="M15.6 6.2L18 8.3L15.6 10.4Z" fill="#444"/><path d="M11.3 19.6L20.4 11.9" stroke="#444" stroke-width="2.2"/><path d="M11.6 11.9L20.8 19.8" stroke="#444" stroke-width="1.2"/></svg><span style="left:211.40px;top:946.00px;font-size:13px;line-height:13px;color:#262626;font-weight:bold;letter-spacing:-0.145px;">Accessibility: Investigate</span><svg style="position:absolute;left:1407px;top:942px" width="24" height="22"><rect x="1.8" y="1" width="19" height="12.5" rx="1.5" fill="#505050"/><rect x="5" y="17.2" width="6" height="1.6" fill="#505050"/><circle cx="16.2" cy="15" r="5.4" fill="#f3f3f3"/><path d="M16.2 9.6l1.2 1.6 1.9-.6.4 1.9 1.9.6-.6 1.9 1.3 1.4-1.6 1.2.3 1.9-1.9.4-.6 1.9-1.9-.6-1.4 1.3-1.2-1.6-1.9.3-.4-1.9-1.9-.6.6-1.9-1.3-1.4 1.6-1.2-.3-1.9 1.9-.4.6-1.9 1.9.6z" fill="#505050" transform="translate(16.2 15) scale(0.82) translate(-16.2 -15)"/><circle cx="16.2" cy="15" r="1.8" fill="#f3f3f3"/></svg><span style="left:1430.60px;top:946.00px;font-size:13px;line-height:13px;color:#333;letter-spacing:-0.187px;">Display Settings</span><div style="left:1547px;top:939px;width:50px;height:26px;background:#c6c6c6;"></div><svg style="position:absolute;left:1563px;top:943px" width="18" height="18"><g fill="none" stroke="#6a6a6a" stroke-width="1.2"><rect x="1.6" y="1.6" width="14.5" height="14.5"/><path d="M6.4 1.6V16.1M11.3 1.6V16.1M1.6 6.4H16.1M1.6 11.3H16.1"/></g></svg><svg style="position:absolute;left:1612px;top:943px" width="19" height="18"><g fill="none" stroke="#6a6a6a" stroke-width="1.1"><rect x="1.5" y="1.5" width="16" height="14.5"/><rect x="5" y="4" width="9" height="9.5"/><path d="M7 6.5H12M7 8.6H12M7 10.7H12"/></g></svg><svg style="position:absolute;left:1662px;top:943px" width="19" height="18"><g fill="none" stroke="#6a6a6a" stroke-width="1.1"><rect x="1.5" y="1.5" width="16" height="14.5"/><path d="M1.5 11H10V1.5M6 1.5V11"/></g></svg><div style="left:1704px;top:951px;width:9.5px;height:1.3px;background:#444;"></div><div style="left:1720px;top:951.5px;width:125px;height:1.2px;background:#444;"></div><div style="left:1767px;top:945px;width:6px;height:14px;background:#444;"></div><div style="left:1782px;top:946px;width:1px;height:12px;background:#444;"></div><div style="left:1850.5px;top:951px;width:10px;height:1.3px;background:#444;"></div><div style="left:1855px;top:946px;width:1.3px;height:11px;background:#444;"></div><span style="left:1877.00px;top:946.00px;font-size:13px;line-height:13px;color:#333;letter-spacing:-1.006px;">80%</span>
</body></html>
